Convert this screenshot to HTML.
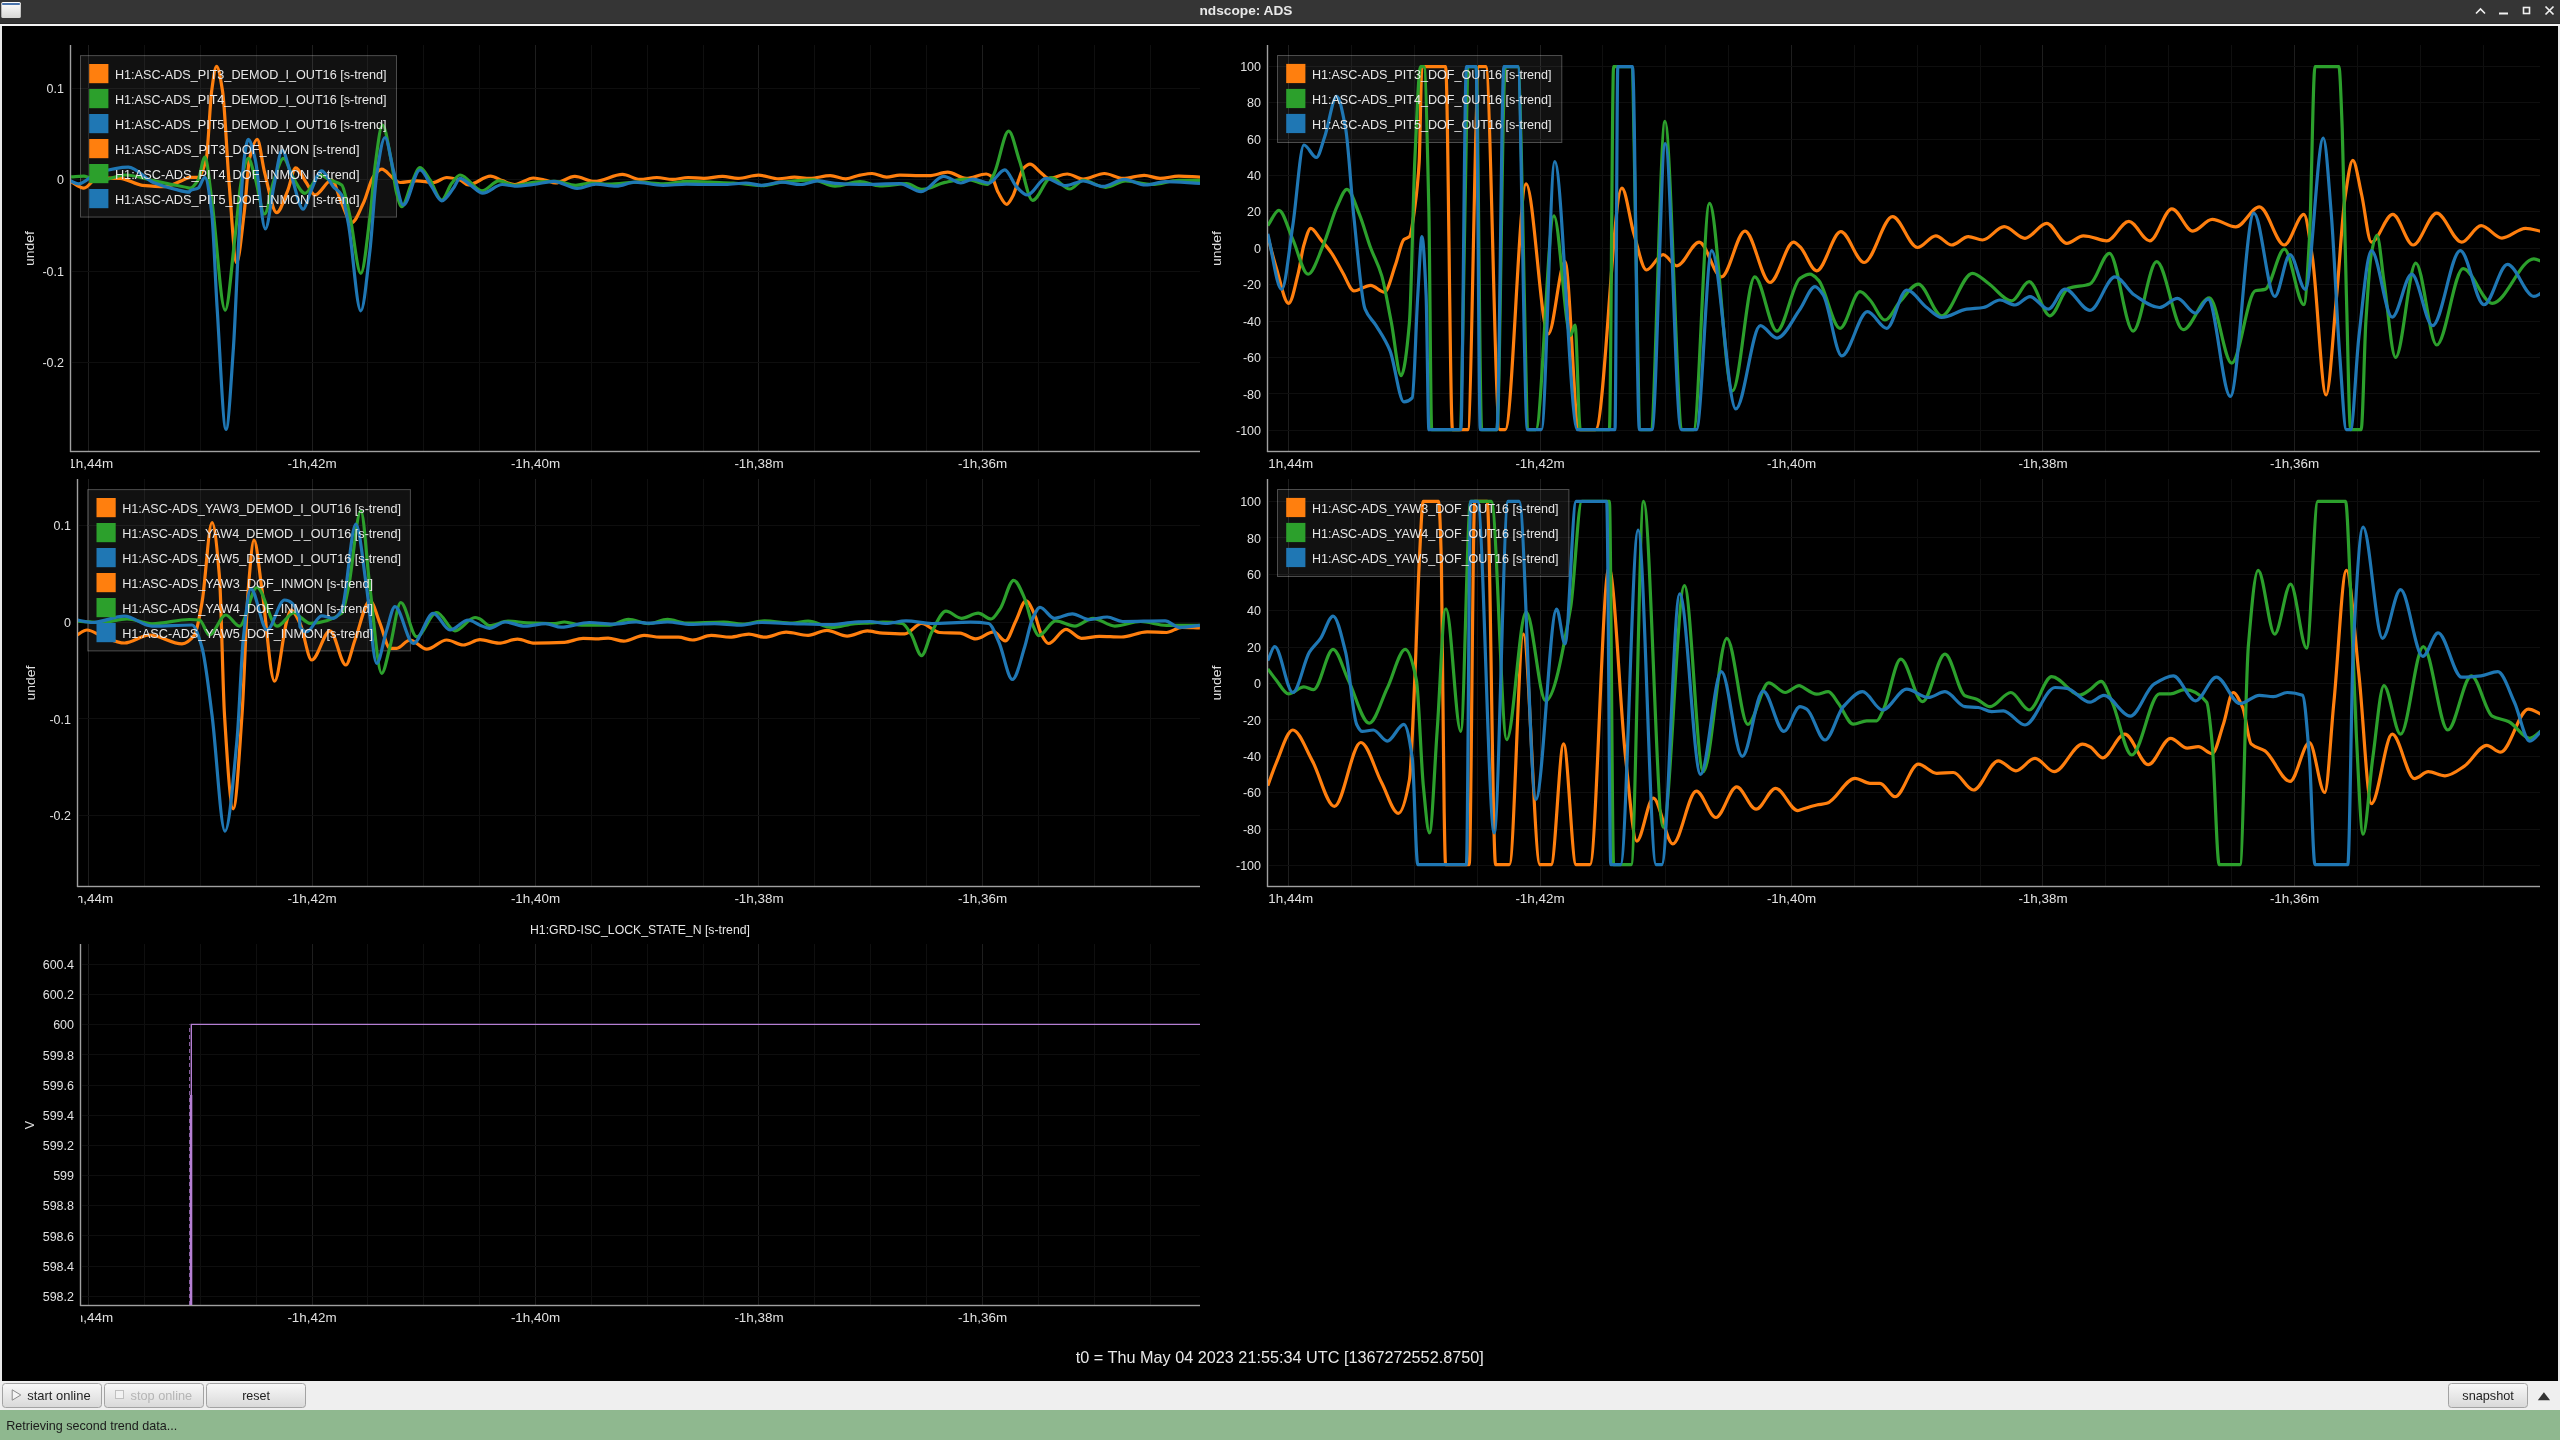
<!DOCTYPE html>
<html><head><meta charset="utf-8"><title>ndscope: ADS</title>
<style>html,body{margin:0;padding:0;width:2560px;height:1440px;overflow:hidden;background:#000;font-family:"Liberation Sans",sans-serif;}</style>
</head><body><svg width="2560" height="1440" viewBox="0 0 2560 1440" style="display:block;will-change:transform;font-family:'Liberation Sans', sans-serif"><rect x="0" y="0" width="2560" height="24" fill="#353535"/><rect x="0" y="23" width="2560" height="1" fill="#2b2b2b"/><rect x="0" y="24" width="2560" height="2" fill="#f4f4f4"/><defs><linearGradient id="wig" x1="0" y1="0" x2="0" y2="1"><stop offset="0" stop-color="#ffffff"/><stop offset="1" stop-color="#d8d8d6"/></linearGradient><linearGradient id="btng" x1="0" y1="0" x2="0" y2="1"><stop offset="0" stop-color="#f8f8f8"/><stop offset="1" stop-color="#d9d9d9"/></linearGradient></defs><rect x="1.3" y="2" width="19.5" height="16" rx="1.5" fill="url(#wig)"/><rect x="2.2" y="3" width="17.6" height="2" fill="#4a74ac"/><text x="1246.0" y="15.3" font-size="13" fill="#e8e8e8" text-anchor="middle" font-weight="bold" textLength="93.0" lengthAdjust="spacingAndGlyphs">ndscope: ADS</text><path d="M2476,13.5 L2480.5,9 L2485,13.5" stroke="#f0f0f0" stroke-width="1.6" fill="none"/><rect x="2499" y="12.5" width="9" height="2" fill="#f0f0f0"/><rect x="2523.5" y="7.5" width="6" height="6" stroke="#f0f0f0" stroke-width="1.6" fill="none"/><path d="M2545.5,6.5 L2553.5,14.5 M2553.5,6.5 L2545.5,14.5" stroke="#f0f0f0" stroke-width="1.7" fill="none"/><rect x="0" y="26" width="2560" height="1355" fill="#e8e8e8"/><rect x="2" y="26" width="2556" height="1355" fill="#000"/><rect x="88" y="45" width="1" height="406" fill="#1e1e1e"/><rect x="144" y="45" width="1" height="406" fill="#0f0f0f"/><rect x="200" y="45" width="1" height="406" fill="#0f0f0f"/><rect x="256" y="45" width="1" height="406" fill="#0f0f0f"/><rect x="312" y="45" width="1" height="406" fill="#1e1e1e"/><rect x="367" y="45" width="1" height="406" fill="#0f0f0f"/><rect x="423" y="45" width="1" height="406" fill="#0f0f0f"/><rect x="479" y="45" width="1" height="406" fill="#0f0f0f"/><rect x="535" y="45" width="1" height="406" fill="#1e1e1e"/><rect x="591" y="45" width="1" height="406" fill="#0f0f0f"/><rect x="647" y="45" width="1" height="406" fill="#0f0f0f"/><rect x="703" y="45" width="1" height="406" fill="#0f0f0f"/><rect x="758" y="45" width="1" height="406" fill="#1e1e1e"/><rect x="814" y="45" width="1" height="406" fill="#0f0f0f"/><rect x="870" y="45" width="1" height="406" fill="#0f0f0f"/><rect x="926" y="45" width="1" height="406" fill="#0f0f0f"/><rect x="982" y="45" width="1" height="406" fill="#1e1e1e"/><rect x="1038" y="45" width="1" height="406" fill="#0f0f0f"/><rect x="1094" y="45" width="1" height="406" fill="#0f0f0f"/><rect x="1150" y="45" width="1" height="406" fill="#0f0f0f"/><rect x="72" y="88" width="1128" height="1" fill="#0e0e0e"/><rect x="72" y="179" width="1128" height="1" fill="#0e0e0e"/><rect x="72" y="271" width="1128" height="1" fill="#0e0e0e"/><rect x="72" y="362" width="1128" height="1" fill="#0e0e0e"/><rect x="69.8" y="45" width="1.4" height="407" fill="#a0a0a0"/><rect x="70" y="450.8" width="1130" height="1.4" fill="#a0a0a0"/><text x="64.0" y="92.8" font-size="12.5" fill="#e0e0e0" text-anchor="end" font-weight="normal">0.1</text><text x="64.0" y="184.2" font-size="12.5" fill="#e0e0e0" text-anchor="end" font-weight="normal">0</text><text x="64.0" y="275.7" font-size="12.5" fill="#e0e0e0" text-anchor="end" font-weight="normal">-0.1</text><text x="64.0" y="367.1" font-size="12.5" fill="#e0e0e0" text-anchor="end" font-weight="normal">-0.2</text><clipPath id="ctlx"><rect x="71" y="451" width="1170" height="30"/></clipPath><g clip-path="url(#ctlx)"><text x="88.5" y="468.0" font-size="12.5" fill="#e0e0e0" text-anchor="middle" font-weight="normal" textLength="49.2" lengthAdjust="spacingAndGlyphs">-1h,44m</text><text x="312.0" y="468.0" font-size="12.5" fill="#e0e0e0" text-anchor="middle" font-weight="normal" textLength="49.2" lengthAdjust="spacingAndGlyphs">-1h,42m</text><text x="535.5" y="468.0" font-size="12.5" fill="#e0e0e0" text-anchor="middle" font-weight="normal" textLength="49.2" lengthAdjust="spacingAndGlyphs">-1h,40m</text><text x="759.0" y="468.0" font-size="12.5" fill="#e0e0e0" text-anchor="middle" font-weight="normal" textLength="49.2" lengthAdjust="spacingAndGlyphs">-1h,38m</text><text x="982.5" y="468.0" font-size="12.5" fill="#e0e0e0" text-anchor="middle" font-weight="normal" textLength="49.2" lengthAdjust="spacingAndGlyphs">-1h,36m</text></g><text x="0" y="0" font-size="12.5" fill="#e0e0e0" text-anchor="middle" textLength="35" lengthAdjust="spacingAndGlyphs" transform="translate(34.0,248.5) rotate(-90)">undef</text><rect x="80.5" y="55.6" width="316.0" height="161.5" fill="rgba(255,255,255,0.065)" stroke="rgba(255,255,255,0.28)" stroke-width="1"/><clipPath id="ctl"><rect x="71" y="45" width="1129" height="406"/></clipPath><g clip-path="url(#ctl)"><path d="M70.0,181.1C74.6,183.4 79.3,188.1 83.9,188.1C88.5,188.1 93.1,177.8 97.8,177.8C105.2,177.8 112.6,178.0 120.0,178.3C127.4,178.7 134.8,184.5 142.2,185.3C149.6,186.0 157.0,186.7 164.4,186.7C170.0,186.7 175.6,183.2 181.1,181.1C184.1,180.0 187.0,177.4 190.0,177.4C192.7,177.4 195.4,177.4 198.1,177.4C200.8,177.4 203.6,169.6 206.3,158.4C208.1,151.0 209.9,103.5 211.7,90.7C213.3,79.1 214.9,66.3 216.6,66.3C218.5,66.3 220.5,78.2 222.5,90.7C224.8,104.8 227.0,158.3 229.3,185.5C231.7,214.9 234.2,262.7 236.6,262.7C239.1,262.7 241.7,233.0 244.2,212.6C246.0,198.1 247.8,165.9 249.6,158.4C252.1,147.9 254.7,139.4 257.2,139.4C259.6,139.4 262.1,162.5 264.5,172.0C268.6,187.6 272.7,212.6 276.7,212.6C280.3,212.6 283.9,199.5 287.6,190.9C290.3,184.5 293.0,167.9 295.7,167.9C299.3,167.9 303.0,178.2 306.7,183.3C309.4,187.2 312.2,195.0 315.0,195.0C320.6,195.0 326.1,180.0 331.7,180.0C335.0,180.0 338.3,196.3 341.7,203.3C345.0,210.3 348.3,222.5 351.7,222.5C355.6,222.5 359.4,211.3 363.3,203.3C366.7,196.5 370.0,181.1 373.3,176.7C376.1,173.0 378.9,169.2 381.7,169.2C385.6,169.2 389.4,175.7 393.3,178.3C395.6,179.9 397.8,182.5 400.0,182.5C405.6,182.5 411.1,180.8 416.7,180.8C422.2,180.8 427.8,182.5 433.3,182.5C437.8,182.5 442.2,177.5 446.7,177.5C451.1,177.5 455.6,178.7 460.0,180.0C462.8,180.8 465.6,185.0 468.3,185.0C469.2,185.0 470.1,184.7 470.9,184.5C477.4,183.0 484.0,176.2 490.5,176.2C494.4,176.2 498.3,179.3 502.2,180.6C506.4,182.0 510.5,184.5 514.7,184.5C520.9,184.5 527.2,178.0 533.4,178.0C537.6,178.0 541.8,179.4 545.9,180.3C549.1,181.0 552.2,183.0 555.3,183.0C561.8,183.0 568.3,176.4 574.8,176.4C581.4,176.4 587.9,181.4 594.4,181.4C603.8,181.4 613.1,174.4 622.5,174.4C628.2,174.4 634.0,179.4 639.7,179.4C645.4,179.4 651.1,177.5 656.9,177.5C662.1,177.5 667.3,179.4 672.5,179.4C677.7,179.4 682.9,177.5 688.1,177.5C693.3,177.5 698.5,178.3 703.8,178.3C710.0,178.3 716.2,176.4 722.5,176.4C727.7,176.4 732.9,178.3 738.1,178.3C744.9,178.3 751.7,175.2 758.4,175.2C765.2,175.2 772.0,178.8 778.8,178.8C784.0,178.8 789.2,177.2 794.4,177.2C799.6,177.2 804.8,178.3 810.0,178.3C816.8,178.3 823.5,175.6 830.3,175.6C835.5,175.6 840.7,178.8 845.9,178.8C850.6,178.8 855.3,175.9 860.0,175.1C864.0,174.4 868.0,173.5 872.0,173.5C876.8,173.5 881.7,177.1 886.6,177.1C891.0,177.1 895.4,175.1 899.8,175.1C906.5,175.1 913.1,175.7 919.8,175.7C922.9,175.7 926.0,175.7 929.1,175.7C935.3,175.7 941.5,172.2 947.6,172.2C953.8,172.2 960.0,178.4 966.2,178.4C972.9,178.4 979.5,174.0 986.2,174.0C987.9,174.0 989.7,175.1 991.5,176.4C993.7,178.0 995.9,188.4 998.1,192.3C1001.0,197.4 1003.9,204.3 1006.7,204.3C1008.7,204.3 1010.7,199.9 1012.7,196.3C1014.5,193.1 1016.3,186.4 1018.0,181.7C1019.8,177.1 1021.6,170.3 1023.3,168.4C1025.6,166.1 1027.8,164.2 1030.0,164.2C1033.5,164.2 1037.1,169.7 1040.6,172.4C1043.3,174.4 1045.9,178.4 1048.6,178.4C1054.8,178.4 1061.0,174.0 1067.2,174.0C1072.5,174.0 1077.8,179.1 1083.1,179.1C1090.2,179.1 1097.3,173.5 1104.4,173.5C1110.6,173.5 1116.8,178.4 1122.9,178.4C1130.0,178.4 1137.1,175.3 1144.2,175.3C1149.5,175.3 1154.8,178.4 1160.1,178.4C1166.3,178.4 1172.5,176.1 1178.7,176.1C1185.8,176.1 1192.9,176.8 1200.0,177.1" stroke="#ff7f0e" stroke-width="3.2" fill="none" stroke-linejoin="round"/><path d="M70.0,176.9C74.6,176.7 79.3,176.1 83.9,176.1C88.5,176.1 93.1,181.1 97.8,181.1C107.0,181.1 116.3,175.0 125.6,175.0C134.8,175.0 144.1,178.6 153.3,180.6C160.7,182.1 168.1,183.8 175.6,185.3C180.2,186.2 184.8,186.9 189.4,188.1C189.6,188.1 189.8,188.2 190.0,188.2C192.7,188.2 195.4,184.3 198.1,180.1C200.4,176.5 202.6,157.0 204.9,157.0C207.2,157.0 209.4,183.3 211.7,199.1C216.2,230.5 220.7,310.2 225.2,310.2C228.4,310.2 231.6,265.3 234.7,239.7C237.0,221.4 239.2,190.7 241.5,180.1C243.7,169.5 246.0,158.4 248.3,158.4C250.5,158.4 252.8,170.1 255.0,177.4C258.2,187.5 261.4,214.0 264.5,214.0C267.7,214.0 270.8,188.9 274.0,180.1C277.2,171.3 280.3,158.4 283.5,158.4C286.7,158.4 289.8,172.3 293.0,177.4C297.0,183.8 301.0,193.3 305.0,193.3C310.0,193.3 315.0,175.0 320.0,175.0C323.3,175.0 326.7,178.5 330.0,180.0C333.9,181.8 337.8,181.9 341.7,185.0C344.4,187.2 347.2,204.5 350.0,216.7C353.6,232.5 357.2,273.3 360.8,273.3C363.9,273.3 366.9,240.6 370.0,216.7C371.7,203.6 373.3,178.8 375.0,166.7C377.5,148.5 380.0,125.0 382.5,125.0C385.3,125.0 388.1,144.8 390.8,158.3C392.8,167.8 394.7,186.2 396.7,193.3C398.3,199.4 400.0,206.7 401.7,206.7C405.0,206.7 408.3,190.3 411.7,183.3C414.4,177.5 417.2,167.5 420.0,167.5C423.3,167.5 426.7,175.2 430.0,180.0C433.9,185.6 437.8,200.0 441.7,200.0C445.0,200.0 448.3,187.5 451.7,183.3C454.4,179.9 457.2,175.0 460.0,175.0C467.3,175.0 474.6,190.8 481.9,190.8C487.6,190.8 493.3,180.9 499.1,180.9C504.3,180.9 509.5,185.3 514.7,185.3C522.5,185.3 530.3,182.2 538.1,181.9C543.9,181.6 549.6,181.4 555.3,181.4C562.1,181.4 568.9,185.3 575.6,185.3C580.8,185.3 586.0,183.0 591.2,183.0C597.0,183.0 602.7,184.1 608.4,184.1C618.9,184.1 629.3,182.2 639.7,182.2C647.5,182.2 655.3,183.8 663.1,183.8C671.5,183.8 679.8,181.4 688.1,181.4C695.4,181.4 702.7,181.9 710.0,182.2C717.8,182.5 725.6,182.6 733.4,183.0C742.8,183.4 752.2,185.6 761.6,185.6C768.3,185.6 775.1,182.9 781.9,182.2C792.3,181.1 802.7,179.8 813.1,179.8C820.4,179.8 827.7,186.1 835.0,186.1C843.3,186.1 851.7,181.7 860.0,181.7C866.6,181.7 873.3,186.0 879.9,186.0C888.8,186.0 897.6,183.7 906.5,183.7C911.8,183.7 917.1,189.4 922.4,189.4C929.9,189.4 937.5,183.9 945.0,182.4C952.1,180.9 959.2,179.1 966.2,179.1C973.3,179.1 980.4,184.4 987.5,184.4C989.7,184.4 991.9,178.2 994.1,173.7C999.0,164.0 1003.9,131.2 1008.7,131.2C1012.3,131.2 1015.8,150.3 1019.4,160.5C1023.8,173.1 1028.2,200.3 1032.6,200.3C1038.8,200.3 1045.0,177.7 1051.2,177.7C1057.4,177.7 1063.6,189.0 1069.8,189.0C1074.3,189.0 1078.7,180.4 1083.1,180.4C1090.6,180.4 1098.2,187.3 1105.7,187.3C1112.3,187.3 1119.0,181.0 1125.6,181.0C1134.5,181.0 1143.3,184.4 1152.2,184.4C1161.0,184.4 1169.9,180.4 1178.7,180.4C1185.8,180.4 1192.9,180.4 1200.0,180.4" stroke="#2ca02c" stroke-width="3.2" fill="none" stroke-linejoin="round"/><path d="M70.0,180.6C72.8,181.7 75.6,183.9 78.3,183.9C84.8,183.9 91.3,174.6 97.8,172.8C108.0,169.9 118.1,167.2 128.3,167.2C136.7,167.2 145.0,179.1 153.3,182.5C160.7,185.5 168.1,187.7 175.6,189.4C180.2,190.6 184.8,192.2 189.4,192.2C189.6,192.2 189.8,191.1 190.0,190.9C192.7,188.9 195.4,189.7 198.1,188.2C200.4,186.9 202.6,177.4 204.9,177.4C207.2,177.4 209.4,194.1 211.7,212.6C213.5,227.4 215.3,279.5 217.1,307.5C220.1,353.6 223.1,429.4 226.0,429.4C228.5,429.4 230.9,383.4 233.4,348.1C235.2,321.9 237.0,270.7 238.8,239.7C240.6,208.7 242.4,170.9 244.2,158.4C245.6,149.0 246.9,139.4 248.3,139.4C250.5,139.4 252.8,149.7 255.0,158.4C258.5,171.7 261.9,228.9 265.3,228.9C268.2,228.9 271.1,198.9 274.0,185.5C276.7,172.9 279.4,150.3 282.1,150.3C284.9,150.3 287.6,164.5 290.3,172.0C294.6,183.9 299.0,209.2 303.3,209.2C305.6,209.2 307.8,198.1 310.0,193.3C313.9,185.0 317.8,170.8 321.7,170.8C325.6,170.8 329.4,182.2 333.3,186.7C336.1,189.8 338.9,190.4 341.7,195.0C343.9,198.7 346.1,211.9 348.3,223.3C352.5,244.8 356.7,310.8 360.8,310.8C363.9,310.8 366.9,275.9 370.0,250.0C372.2,231.2 374.4,189.5 376.7,175.0C379.4,156.9 382.2,137.5 385.0,137.5C387.8,137.5 390.6,159.7 393.3,170.0C396.7,182.3 400.0,205.0 403.3,205.0C408.9,205.0 414.4,170.0 420.0,170.0C423.9,170.0 427.8,181.1 431.7,186.7C435.0,191.4 438.3,200.8 441.7,200.8C445.6,200.8 449.4,193.3 453.3,188.3C455.6,185.5 457.8,178.3 460.0,178.3C463.6,178.3 467.3,182.9 470.9,185.3C474.8,187.9 478.8,193.1 482.7,193.1C489.2,193.1 495.7,184.5 502.2,184.5C506.4,184.5 510.5,186.1 514.7,186.1C520.9,186.1 527.2,185.2 533.4,184.5C540.2,183.8 547.0,181.4 553.8,181.4C561.6,181.4 569.4,188.4 577.2,188.4C583.4,188.4 589.7,184.1 595.9,184.1C602.7,184.1 609.5,186.1 616.2,186.1C622.5,186.1 628.8,182.2 635.0,182.2C644.4,182.2 653.8,185.3 663.1,185.3C670.9,185.3 678.8,184.2 686.6,184.2C694.4,184.2 702.2,184.5 710.0,184.5C715.2,184.5 720.4,184.5 725.6,184.5C732.4,184.5 739.2,183.0 745.9,183.0C751.1,183.0 756.4,185.3 761.6,185.3C768.3,185.3 775.1,182.2 781.9,182.2C788.1,182.2 794.4,184.5 800.6,184.5C806.4,184.5 812.1,180.9 817.8,180.9C823.5,180.9 829.3,183.1 835.0,183.4C843.3,184.0 851.7,184.4 860.0,184.4C873.3,184.4 886.6,183.7 899.8,183.7C906.9,183.7 914.0,191.7 921.1,191.7C928.6,191.7 936.1,176.4 943.7,176.4C949.4,176.4 955.2,183.0 960.9,183.0C964.9,183.0 968.9,179.1 972.9,179.1C978.2,179.1 983.5,183.0 988.8,183.0C994.1,183.0 999.4,169.8 1004.8,169.8C1008.7,169.8 1012.7,183.1 1016.7,187.0C1020.2,190.5 1023.8,195.0 1027.3,195.0C1033.5,195.0 1039.7,178.4 1045.9,178.4C1052.6,178.4 1059.2,185.7 1065.8,185.7C1071.6,185.7 1077.4,181.0 1083.1,181.0C1089.7,181.0 1096.4,186.4 1103.0,186.4C1110.1,186.4 1117.2,179.3 1124.3,179.3C1131.4,179.3 1138.4,185.0 1145.5,185.0C1152.2,185.0 1158.8,181.7 1165.4,181.7C1177.0,181.7 1188.5,182.8 1200.0,183.3" stroke="#1f77b4" stroke-width="3.2" fill="none" stroke-linejoin="round"/></g><rect x="89.2" y="64.0" width="19.2" height="19.2" fill="#ff7f0e"/><text x="114.9" y="79.2" font-size="13" fill="#e6e6e6" text-anchor="start" font-weight="normal" textLength="271.6" lengthAdjust="spacingAndGlyphs">H1:ASC-ADS_PIT3_DEMOD_I_OUT16 [s-trend]</text><rect x="89.2" y="89.0" width="19.2" height="19.2" fill="#2ca02c"/><text x="114.9" y="104.2" font-size="13" fill="#e6e6e6" text-anchor="start" font-weight="normal" textLength="271.6" lengthAdjust="spacingAndGlyphs">H1:ASC-ADS_PIT4_DEMOD_I_OUT16 [s-trend]</text><rect x="89.2" y="114.0" width="19.2" height="19.2" fill="#1f77b4"/><text x="114.9" y="129.2" font-size="13" fill="#e6e6e6" text-anchor="start" font-weight="normal" textLength="271.6" lengthAdjust="spacingAndGlyphs">H1:ASC-ADS_PIT5_DEMOD_I_OUT16 [s-trend]</text><rect x="89.2" y="139.0" width="19.2" height="19.2" fill="#ff7f0e"/><text x="114.9" y="154.2" font-size="13" fill="#e6e6e6" text-anchor="start" font-weight="normal" textLength="244.6" lengthAdjust="spacingAndGlyphs">H1:ASC-ADS_PIT3_DOF_INMON [s-trend]</text><rect x="89.2" y="164.0" width="19.2" height="19.2" fill="#2ca02c"/><text x="114.9" y="179.2" font-size="13" fill="#e6e6e6" text-anchor="start" font-weight="normal" textLength="244.6" lengthAdjust="spacingAndGlyphs">H1:ASC-ADS_PIT4_DOF_INMON [s-trend]</text><rect x="89.2" y="189.0" width="19.2" height="19.2" fill="#1f77b4"/><text x="114.9" y="204.2" font-size="13" fill="#e6e6e6" text-anchor="start" font-weight="normal" textLength="244.6" lengthAdjust="spacingAndGlyphs">H1:ASC-ADS_PIT5_DOF_INMON [s-trend]</text><rect x="1288" y="45" width="1" height="406" fill="#1e1e1e"/><rect x="1351" y="45" width="1" height="406" fill="#0f0f0f"/><rect x="1414" y="45" width="1" height="406" fill="#0f0f0f"/><rect x="1477" y="45" width="1" height="406" fill="#0f0f0f"/><rect x="1540" y="45" width="1" height="406" fill="#1e1e1e"/><rect x="1602" y="45" width="1" height="406" fill="#0f0f0f"/><rect x="1665" y="45" width="1" height="406" fill="#0f0f0f"/><rect x="1728" y="45" width="1" height="406" fill="#0f0f0f"/><rect x="1791" y="45" width="1" height="406" fill="#1e1e1e"/><rect x="1854" y="45" width="1" height="406" fill="#0f0f0f"/><rect x="1917" y="45" width="1" height="406" fill="#0f0f0f"/><rect x="1980" y="45" width="1" height="406" fill="#0f0f0f"/><rect x="2042" y="45" width="1" height="406" fill="#1e1e1e"/><rect x="2105" y="45" width="1" height="406" fill="#0f0f0f"/><rect x="2168" y="45" width="1" height="406" fill="#0f0f0f"/><rect x="2231" y="45" width="1" height="406" fill="#0f0f0f"/><rect x="2294" y="45" width="1" height="406" fill="#1e1e1e"/><rect x="2357" y="45" width="1" height="406" fill="#0f0f0f"/><rect x="2420" y="45" width="1" height="406" fill="#0f0f0f"/><rect x="2483" y="45" width="1" height="406" fill="#0f0f0f"/><rect x="1269" y="66" width="1271" height="1" fill="#0e0e0e"/><rect x="1269" y="102" width="1271" height="1" fill="#0e0e0e"/><rect x="1269" y="139" width="1271" height="1" fill="#0e0e0e"/><rect x="1269" y="175" width="1271" height="1" fill="#0e0e0e"/><rect x="1269" y="211" width="1271" height="1" fill="#0e0e0e"/><rect x="1269" y="248" width="1271" height="1" fill="#0e0e0e"/><rect x="1269" y="284" width="1271" height="1" fill="#0e0e0e"/><rect x="1269" y="321" width="1271" height="1" fill="#0e0e0e"/><rect x="1269" y="357" width="1271" height="1" fill="#0e0e0e"/><rect x="1269" y="393" width="1271" height="1" fill="#0e0e0e"/><rect x="1269" y="430" width="1271" height="1" fill="#0e0e0e"/><rect x="1266.8" y="45" width="1.4" height="407" fill="#a0a0a0"/><rect x="1267" y="450.8" width="1273" height="1.4" fill="#a0a0a0"/><text x="1261.0" y="70.8" font-size="12.5" fill="#e0e0e0" text-anchor="end" font-weight="normal">100</text><text x="1261.0" y="107.2" font-size="12.5" fill="#e0e0e0" text-anchor="end" font-weight="normal">80</text><text x="1261.0" y="143.7" font-size="12.5" fill="#e0e0e0" text-anchor="end" font-weight="normal">60</text><text x="1261.0" y="180.0" font-size="12.5" fill="#e0e0e0" text-anchor="end" font-weight="normal">40</text><text x="1261.0" y="216.4" font-size="12.5" fill="#e0e0e0" text-anchor="end" font-weight="normal">20</text><text x="1261.0" y="252.8" font-size="12.5" fill="#e0e0e0" text-anchor="end" font-weight="normal">0</text><text x="1261.0" y="289.2" font-size="12.5" fill="#e0e0e0" text-anchor="end" font-weight="normal">-20</text><text x="1261.0" y="325.7" font-size="12.5" fill="#e0e0e0" text-anchor="end" font-weight="normal">-40</text><text x="1261.0" y="362.1" font-size="12.5" fill="#e0e0e0" text-anchor="end" font-weight="normal">-60</text><text x="1261.0" y="398.5" font-size="12.5" fill="#e0e0e0" text-anchor="end" font-weight="normal">-80</text><text x="1261.0" y="434.9" font-size="12.5" fill="#e0e0e0" text-anchor="end" font-weight="normal">-100</text><clipPath id="ctrx"><rect x="1268" y="451" width="1313" height="30"/></clipPath><g clip-path="url(#ctrx)"><text x="1288.5" y="468.0" font-size="12.5" fill="#e0e0e0" text-anchor="middle" font-weight="normal" textLength="49.2" lengthAdjust="spacingAndGlyphs">-1h,44m</text><text x="1540.0" y="468.0" font-size="12.5" fill="#e0e0e0" text-anchor="middle" font-weight="normal" textLength="49.2" lengthAdjust="spacingAndGlyphs">-1h,42m</text><text x="1791.5" y="468.0" font-size="12.5" fill="#e0e0e0" text-anchor="middle" font-weight="normal" textLength="49.2" lengthAdjust="spacingAndGlyphs">-1h,40m</text><text x="2043.0" y="468.0" font-size="12.5" fill="#e0e0e0" text-anchor="middle" font-weight="normal" textLength="49.2" lengthAdjust="spacingAndGlyphs">-1h,38m</text><text x="2294.5" y="468.0" font-size="12.5" fill="#e0e0e0" text-anchor="middle" font-weight="normal" textLength="49.2" lengthAdjust="spacingAndGlyphs">-1h,36m</text></g><text x="0" y="0" font-size="12.5" fill="#e0e0e0" text-anchor="middle" textLength="35" lengthAdjust="spacingAndGlyphs" transform="translate(1221.0,248.5) rotate(-90)">undef</text><rect x="1277.5" y="55.5" width="284.3" height="87.0" fill="rgba(255,255,255,0.065)" stroke="rgba(255,255,255,0.28)" stroke-width="1"/><clipPath id="ctr"><rect x="1268" y="45" width="1272" height="406"/></clipPath><g clip-path="url(#ctr)"><path d="M1267.8,236.7C1270.6,246.9 1273.3,258.2 1276.1,267.2C1280.3,280.8 1284.4,303.3 1288.6,303.3C1291.9,303.3 1295.1,285.6 1298.3,272.8C1300.2,265.5 1302.0,251.1 1303.9,245.0C1306.2,237.4 1308.5,228.3 1310.8,228.3C1314.1,228.3 1317.3,235.6 1320.6,239.4C1324.3,243.9 1328.0,247.9 1331.7,253.3C1335.4,258.7 1339.1,266.5 1342.8,272.8C1346.5,279.0 1350.2,290.8 1353.9,290.8C1359.4,290.8 1365.0,285.3 1370.6,285.3C1375.2,285.3 1379.8,292.2 1384.4,292.2C1388.1,292.2 1391.9,274.6 1395.6,264.4C1398.3,256.8 1401.1,241.7 1403.9,239.4C1405.7,237.9 1407.6,238.4 1409.4,236.7C1411.3,235.0 1413.1,219.8 1415.0,206.1C1416.4,195.9 1417.8,185.1 1419.2,161.7C1420.1,146.1 1421.0,66.7 1421.9,66.7C1429.8,66.7 1437.7,66.7 1445.6,66.7C1447.9,66.7 1450.2,429.7 1452.5,429.7C1457.6,429.7 1462.7,429.7 1467.8,429.7C1471.5,429.7 1475.2,66.7 1478.9,66.7C1481.2,66.7 1483.5,66.7 1485.8,66.7C1490.5,66.7 1495.1,429.7 1499.7,429.7C1501.6,429.7 1503.4,429.7 1505.3,429.7C1512.2,429.7 1519.2,183.9 1526.1,183.9C1533.5,183.9 1540.9,333.9 1548.3,333.9C1553.9,333.9 1559.4,261.7 1565.0,261.7C1569.6,261.7 1574.3,429.7 1578.9,429.7C1584.4,429.7 1590.0,429.7 1595.6,429.7C1604.4,429.7 1613.1,188.1 1621.9,188.1C1625.9,188.1 1629.9,220.8 1633.9,233.9C1638.1,247.6 1642.2,270.0 1646.4,270.0C1651.9,270.0 1657.5,254.7 1663.1,254.7C1667.7,254.7 1672.3,265.8 1676.9,265.8C1684.4,265.8 1691.8,242.2 1699.2,242.2C1706.6,242.2 1714.0,276.9 1721.4,276.9C1729.3,276.9 1737.1,231.1 1745.0,231.1C1753.3,231.1 1761.7,282.5 1770.0,282.5C1777.9,282.5 1785.7,242.2 1793.6,242.2C1795.7,242.2 1797.9,244.8 1800.0,246.7C1805.6,251.6 1811.1,270.8 1816.7,270.8C1824.7,270.8 1832.8,231.7 1840.8,231.7C1848.6,231.7 1856.4,262.5 1864.2,262.5C1873.6,262.5 1883.1,216.7 1892.5,216.7C1900.8,216.7 1909.2,247.5 1917.5,247.5C1923.6,247.5 1929.7,235.8 1935.8,235.8C1941.1,235.8 1946.4,245.0 1951.7,245.0C1957.2,245.0 1962.8,236.7 1968.3,236.7C1973.1,236.7 1977.8,240.0 1982.5,240.0C1989.7,240.0 1996.9,226.7 2004.2,226.7C2011.1,226.7 2018.1,238.3 2025.0,238.3C2032.2,238.3 2039.4,223.3 2046.7,223.3C2053.3,223.3 2060.0,243.3 2066.7,243.3C2072.2,243.3 2077.8,235.8 2083.3,235.8C2085.6,235.8 2087.8,236.3 2090.0,236.7C2095.6,237.6 2101.1,240.8 2106.7,240.8C2114.1,240.8 2121.5,221.4 2128.9,221.4C2135.8,221.4 2142.8,240.8 2149.7,240.8C2157.1,240.8 2164.5,208.9 2171.9,208.9C2178.9,208.9 2185.8,231.1 2192.8,231.1C2199.3,231.1 2205.7,219.4 2212.2,219.4C2220.1,219.4 2228.0,226.9 2235.8,226.9C2243.7,226.9 2251.6,206.9 2259.4,206.9C2267.8,206.9 2276.1,245.0 2284.4,245.0C2290.9,245.0 2297.4,214.4 2303.9,214.4C2306.7,214.4 2309.4,238.1 2312.2,256.1C2316.9,286.1 2321.5,395.0 2326.1,395.0C2329.6,395.0 2333.1,331.9 2336.7,295.0C2339.4,265.8 2342.2,216.6 2345.0,197.8C2347.6,180.2 2350.2,160.3 2352.8,160.3C2355.7,160.3 2358.7,182.2 2361.7,195.0C2364.9,209.0 2368.1,242.2 2371.4,242.2C2378.5,242.2 2385.6,214.4 2392.8,214.4C2399.5,214.4 2406.3,245.0 2413.1,245.0C2420.9,245.0 2428.8,213.1 2436.7,213.1C2445.0,213.1 2453.3,242.2 2461.7,242.2C2468.1,242.2 2474.6,225.6 2481.1,225.6C2488.1,225.6 2495.0,238.1 2501.9,238.1C2509.8,238.1 2517.7,228.3 2525.6,228.3C2531.1,228.3 2536.7,230.6 2542.2,231.7" stroke="#ff7f0e" stroke-width="3.2" fill="none" stroke-linejoin="round"/><path d="M1267.8,225.6C1271.5,220.5 1275.2,210.3 1278.9,210.3C1283.5,210.3 1288.1,229.3 1292.8,239.4C1297.9,250.6 1303.0,274.2 1308.1,274.2C1313.1,274.2 1318.2,256.6 1323.3,245.0C1328.0,234.5 1332.6,215.8 1337.2,206.1C1340.5,199.3 1343.7,189.4 1346.9,189.4C1351.1,189.4 1355.3,204.4 1359.4,214.4C1363.1,223.4 1366.9,237.7 1370.6,247.8C1374.3,257.9 1378.0,263.2 1381.7,275.6C1384.9,286.3 1388.1,306.2 1391.4,322.8C1394.6,339.4 1397.9,375.6 1401.1,375.6C1403.9,375.6 1406.7,353.1 1409.4,322.8C1411.3,302.5 1413.1,194.9 1415.0,156.1C1416.9,117.3 1418.7,66.7 1420.6,66.7C1421.7,66.7 1422.8,66.7 1423.9,66.7C1425.6,66.7 1427.2,137.8 1428.9,211.7C1429.8,252.7 1430.7,429.7 1431.7,429.7C1440.9,429.7 1450.2,429.7 1459.4,429.7C1462.7,429.7 1465.9,66.7 1469.2,66.7C1471.5,66.7 1473.8,66.7 1476.1,66.7C1478.0,66.7 1479.8,429.7 1481.7,429.7C1486.8,429.7 1491.9,429.7 1496.9,429.7C1499.7,429.7 1502.5,66.7 1505.3,66.7C1509.4,66.7 1513.6,66.7 1517.8,66.7C1521.5,66.7 1525.2,429.7 1528.9,429.7C1531.2,429.7 1533.5,429.7 1535.8,429.7C1541.9,429.7 1547.9,215.8 1553.9,215.8C1559.4,215.8 1565.0,335.3 1570.6,335.3C1572.0,335.3 1573.5,325.0 1575.0,325.0C1576.8,325.0 1578.5,429.7 1580.3,429.7C1590.0,429.7 1599.7,429.7 1609.4,429.7C1610.8,429.7 1612.2,66.7 1613.6,66.7C1619.4,66.7 1625.3,66.7 1631.1,66.7C1634.4,66.7 1637.6,429.7 1640.8,429.7C1644.1,429.7 1647.3,429.7 1650.6,429.7C1655.4,429.7 1660.2,121.4 1665.0,121.4C1670.8,121.4 1676.7,429.7 1682.5,429.7C1686.2,429.7 1689.9,429.7 1693.6,429.7C1698.9,429.7 1704.2,203.3 1709.4,203.3C1717.1,203.3 1724.8,390.8 1732.5,390.8C1739.9,390.8 1747.3,276.9 1754.7,276.9C1762.1,276.9 1769.5,331.1 1776.9,331.1C1784.6,331.1 1792.3,283.3 1800.0,278.3C1803.3,276.2 1806.7,274.2 1810.0,274.2C1812.8,274.2 1815.6,277.3 1818.3,280.0C1825.6,287.1 1832.8,328.3 1840.0,328.3C1846.7,328.3 1853.3,291.7 1860.0,291.7C1863.3,291.7 1866.7,296.6 1870.0,300.0C1875.0,305.1 1880.0,320.0 1885.0,320.0C1890.0,320.0 1895.0,307.0 1900.0,301.7C1906.1,295.1 1912.2,284.2 1918.3,284.2C1926.1,284.2 1933.9,315.8 1941.7,315.8C1951.9,315.8 1962.2,273.3 1972.5,273.3C1977.8,273.3 1983.1,279.7 1988.3,283.3C1996.1,288.6 2003.9,300.8 2011.7,300.8C2017.5,300.8 2023.3,281.7 2029.2,281.7C2036.1,281.7 2043.1,315.8 2050.0,315.8C2056.1,315.8 2062.2,290.6 2068.3,288.3C2075.6,285.7 2082.8,286.5 2090.0,283.9C2096.5,281.5 2103.0,253.3 2109.4,253.3C2117.3,253.3 2125.2,331.1 2133.1,331.1C2140.9,331.1 2148.8,261.7 2156.7,261.7C2165.5,261.7 2174.3,329.7 2183.1,329.7C2191.9,329.7 2200.6,297.8 2209.4,297.8C2216.9,297.8 2224.3,363.1 2231.7,363.1C2239.5,363.1 2247.4,292.7 2255.3,290.8C2258.5,290.0 2261.8,290.2 2265.0,289.4C2271.5,287.9 2278.0,249.2 2284.4,249.2C2290.9,249.2 2297.4,304.7 2303.9,304.7C2305.7,304.7 2307.6,271.0 2309.4,239.4C2311.3,207.9 2313.1,66.7 2315.0,66.7C2323.0,66.7 2330.9,66.7 2338.9,66.7C2340.0,66.7 2341.1,100.6 2342.2,128.3C2343.6,163.0 2345.0,245.3 2346.4,295.0C2347.8,344.7 2349.2,429.7 2350.6,429.7C2354.1,429.7 2357.6,429.7 2361.1,429.7C2362.7,429.7 2364.3,348.3 2365.8,322.8C2367.7,292.7 2369.5,262.9 2371.4,253.3C2373.2,243.8 2375.1,235.3 2376.9,235.3C2379.3,235.3 2381.6,265.9 2383.9,281.1C2387.8,306.7 2391.7,357.5 2395.6,357.5C2402.3,357.5 2409.1,263.1 2415.8,263.1C2422.8,263.1 2429.7,345.0 2436.7,345.0C2445.5,345.0 2454.3,268.6 2463.1,268.6C2472.8,268.6 2482.5,303.3 2492.2,303.3C2506.1,303.3 2520.0,258.9 2533.9,258.9C2536.7,258.9 2539.4,260.7 2542.2,261.7" stroke="#2ca02c" stroke-width="3.2" fill="none" stroke-linejoin="round"/><path d="M1267.8,233.9C1272.4,252.4 1277.0,289.4 1281.7,289.4C1285.4,289.4 1289.1,249.3 1292.8,225.6C1296.5,201.8 1300.2,145.0 1303.9,145.0C1308.1,145.0 1312.2,157.5 1316.4,157.5C1319.2,157.5 1321.9,144.6 1324.7,136.7C1328.7,125.3 1332.7,96.4 1336.7,96.4C1339.6,96.4 1342.6,112.3 1345.6,128.3C1348.3,143.3 1351.1,191.2 1353.9,217.2C1357.6,251.9 1361.3,299.5 1365.0,308.9C1368.7,318.3 1372.4,319.5 1376.1,325.6C1380.7,333.1 1385.4,339.3 1390.0,350.6C1394.6,361.8 1399.3,401.9 1403.9,401.9C1406.7,401.9 1409.4,400.7 1412.2,397.8C1414.1,395.9 1415.9,324.3 1417.8,295.0C1419.2,273.0 1420.6,236.7 1421.9,236.7C1423.3,236.7 1424.7,263.7 1426.1,295.0C1427.0,315.9 1428.0,429.7 1428.9,429.7C1439.5,429.7 1450.2,429.7 1460.8,429.7C1462.7,429.7 1464.5,66.7 1466.4,66.7C1469.6,66.7 1472.9,66.7 1476.1,66.7C1477.5,66.7 1478.9,429.7 1480.3,429.7C1485.8,429.7 1491.4,429.7 1496.9,429.7C1499.3,429.7 1501.6,66.7 1503.9,66.7C1508.5,66.7 1513.1,66.7 1517.8,66.7C1521.0,66.7 1524.3,429.7 1527.5,429.7C1532.1,429.7 1536.8,429.7 1541.4,429.7C1545.8,429.7 1550.3,161.7 1554.7,161.7C1562.3,161.7 1569.9,429.7 1577.5,429.7C1590.0,429.7 1602.5,429.7 1615.0,429.7C1615.9,429.7 1616.9,66.7 1617.8,66.7C1622.7,66.7 1627.6,66.7 1632.5,66.7C1634.8,66.7 1637.1,429.7 1639.4,429.7C1643.6,429.7 1647.8,429.7 1651.9,429.7C1656.4,429.7 1660.8,143.6 1665.3,143.6C1670.6,143.6 1675.8,429.7 1681.1,429.7C1686.2,429.7 1691.3,429.7 1696.4,429.7C1701.5,429.7 1706.6,250.6 1711.7,250.6C1719.7,250.6 1727.8,408.9 1735.8,408.9C1744.0,408.9 1752.1,325.6 1760.3,325.6C1765.8,325.6 1771.4,338.1 1776.9,338.1C1784.6,338.1 1792.3,319.7 1800.0,309.2C1805.0,302.3 1810.0,286.7 1815.0,286.7C1817.8,286.7 1820.6,291.0 1823.3,295.0C1829.4,303.8 1835.6,355.8 1841.7,355.8C1850.3,355.8 1858.9,311.7 1867.5,311.7C1873.9,311.7 1880.3,328.3 1886.7,328.3C1893.3,328.3 1900.0,290.0 1906.7,290.0C1913.3,290.0 1920.0,302.5 1926.7,307.5C1931.7,311.3 1936.7,317.5 1941.7,317.5C1950.0,317.5 1958.3,310.4 1966.7,309.2C1972.2,308.3 1977.8,308.4 1983.3,307.5C1988.9,306.6 1994.4,300.0 2000.0,300.0C2005.0,300.0 2010.0,305.0 2015.0,305.0C2020.0,305.0 2025.0,296.7 2030.0,296.7C2036.1,296.7 2042.2,309.2 2048.3,309.2C2053.9,309.2 2059.4,289.2 2065.0,289.2C2073.3,289.2 2081.7,310.3 2090.0,310.3C2098.3,310.3 2106.7,276.9 2115.0,276.9C2121.5,276.9 2128.0,290.7 2134.4,295.0C2142.8,300.5 2151.1,307.5 2159.4,307.5C2165.5,307.5 2171.5,298.3 2177.5,298.3C2183.5,298.3 2189.5,313.1 2195.6,313.1C2199.7,313.1 2203.9,299.2 2208.1,299.2C2215.5,299.2 2222.9,396.4 2230.3,396.4C2238.1,396.4 2246.0,213.1 2253.9,213.1C2260.8,213.1 2267.8,296.4 2274.7,296.4C2279.8,296.4 2284.9,254.7 2290.0,254.7C2295.1,254.7 2300.2,289.4 2305.3,289.4C2311.3,289.4 2317.3,138.1 2323.3,138.1C2325.9,138.1 2328.5,180.5 2331.1,211.7C2333.9,245.1 2336.7,313.2 2339.4,350.6C2341.8,381.7 2344.1,429.7 2346.4,429.7C2347.8,429.7 2349.2,429.7 2350.6,429.7C2353.3,429.7 2356.1,360.7 2358.9,336.7C2363.1,300.6 2367.2,250.6 2371.4,250.6C2378.3,250.6 2385.3,317.2 2392.2,317.2C2398.7,317.2 2405.2,274.2 2411.7,274.2C2418.6,274.2 2425.6,325.6 2432.5,325.6C2441.8,325.6 2451.0,250.6 2460.3,250.6C2468.1,250.6 2476.0,304.7 2483.9,304.7C2491.8,304.7 2499.6,264.4 2507.5,264.4C2516.3,264.4 2525.1,296.4 2533.9,296.4C2536.7,296.4 2539.4,294.0 2542.2,292.8" stroke="#1f77b4" stroke-width="3.2" fill="none" stroke-linejoin="round"/></g><rect x="1286.2" y="63.9" width="19.2" height="19.2" fill="#ff7f0e"/><text x="1311.9" y="79.1" font-size="13" fill="#e6e6e6" text-anchor="start" font-weight="normal" textLength="239.7" lengthAdjust="spacingAndGlyphs">H1:ASC-ADS_PIT3_DOF_OUT16 [s-trend]</text><rect x="1286.2" y="88.9" width="19.2" height="19.2" fill="#2ca02c"/><text x="1311.9" y="104.1" font-size="13" fill="#e6e6e6" text-anchor="start" font-weight="normal" textLength="239.7" lengthAdjust="spacingAndGlyphs">H1:ASC-ADS_PIT4_DOF_OUT16 [s-trend]</text><rect x="1286.2" y="113.9" width="19.2" height="19.2" fill="#1f77b4"/><text x="1311.9" y="129.1" font-size="13" fill="#e6e6e6" text-anchor="start" font-weight="normal" textLength="239.7" lengthAdjust="spacingAndGlyphs">H1:ASC-ADS_PIT5_DOF_OUT16 [s-trend]</text><rect x="88" y="479" width="1" height="407" fill="#1e1e1e"/><rect x="144" y="479" width="1" height="407" fill="#0f0f0f"/><rect x="200" y="479" width="1" height="407" fill="#0f0f0f"/><rect x="256" y="479" width="1" height="407" fill="#0f0f0f"/><rect x="312" y="479" width="1" height="407" fill="#1e1e1e"/><rect x="367" y="479" width="1" height="407" fill="#0f0f0f"/><rect x="423" y="479" width="1" height="407" fill="#0f0f0f"/><rect x="479" y="479" width="1" height="407" fill="#0f0f0f"/><rect x="535" y="479" width="1" height="407" fill="#1e1e1e"/><rect x="591" y="479" width="1" height="407" fill="#0f0f0f"/><rect x="647" y="479" width="1" height="407" fill="#0f0f0f"/><rect x="703" y="479" width="1" height="407" fill="#0f0f0f"/><rect x="758" y="479" width="1" height="407" fill="#1e1e1e"/><rect x="814" y="479" width="1" height="407" fill="#0f0f0f"/><rect x="870" y="479" width="1" height="407" fill="#0f0f0f"/><rect x="926" y="479" width="1" height="407" fill="#0f0f0f"/><rect x="982" y="479" width="1" height="407" fill="#1e1e1e"/><rect x="1038" y="479" width="1" height="407" fill="#0f0f0f"/><rect x="1094" y="479" width="1" height="407" fill="#0f0f0f"/><rect x="1150" y="479" width="1" height="407" fill="#0f0f0f"/><rect x="79" y="525" width="1121" height="1" fill="#0e0e0e"/><rect x="79" y="622" width="1121" height="1" fill="#0e0e0e"/><rect x="79" y="718" width="1121" height="1" fill="#0e0e0e"/><rect x="79" y="815" width="1121" height="1" fill="#0e0e0e"/><rect x="76.8" y="479" width="1.4" height="408" fill="#a0a0a0"/><rect x="77" y="885.8" width="1123" height="1.4" fill="#a0a0a0"/><text x="71.0" y="530.1" font-size="12.5" fill="#e0e0e0" text-anchor="end" font-weight="normal">0.1</text><text x="71.0" y="626.8" font-size="12.5" fill="#e0e0e0" text-anchor="end" font-weight="normal">0</text><text x="71.0" y="723.5" font-size="12.5" fill="#e0e0e0" text-anchor="end" font-weight="normal">-0.1</text><text x="71.0" y="820.2" font-size="12.5" fill="#e0e0e0" text-anchor="end" font-weight="normal">-0.2</text><clipPath id="cmlx"><rect x="78" y="886" width="1163" height="30"/></clipPath><g clip-path="url(#cmlx)"><text x="88.5" y="903.0" font-size="12.5" fill="#e0e0e0" text-anchor="middle" font-weight="normal" textLength="49.2" lengthAdjust="spacingAndGlyphs">-1h,44m</text><text x="312.0" y="903.0" font-size="12.5" fill="#e0e0e0" text-anchor="middle" font-weight="normal" textLength="49.2" lengthAdjust="spacingAndGlyphs">-1h,42m</text><text x="535.5" y="903.0" font-size="12.5" fill="#e0e0e0" text-anchor="middle" font-weight="normal" textLength="49.2" lengthAdjust="spacingAndGlyphs">-1h,40m</text><text x="759.0" y="903.0" font-size="12.5" fill="#e0e0e0" text-anchor="middle" font-weight="normal" textLength="49.2" lengthAdjust="spacingAndGlyphs">-1h,38m</text><text x="982.5" y="903.0" font-size="12.5" fill="#e0e0e0" text-anchor="middle" font-weight="normal" textLength="49.2" lengthAdjust="spacingAndGlyphs">-1h,36m</text></g><text x="0" y="0" font-size="12.5" fill="#e0e0e0" text-anchor="middle" textLength="35" lengthAdjust="spacingAndGlyphs" transform="translate(35.0,683.0) rotate(-90)">undef</text><rect x="87.8" y="489.6" width="322.6" height="161.3" fill="rgba(255,255,255,0.065)" stroke="rgba(255,255,255,0.28)" stroke-width="1"/><clipPath id="cml"><rect x="78" y="479" width="1122" height="407"/></clipPath><g clip-path="url(#cml)"><path d="M77.0,635.0C80.3,633.3 83.7,630.0 87.0,630.0C92.0,630.0 97.0,634.5 102.0,636.2C109.5,638.9 117.0,643.0 124.5,643.0C132.8,643.0 141.2,635.0 149.5,635.0C160.3,635.0 171.2,643.8 182.0,643.8C186.2,643.8 190.3,640.3 194.5,635.0C197.0,631.8 199.5,616.4 202.0,602.5C205.3,584.0 208.7,522.5 212.0,522.5C214.5,522.5 217.0,547.4 219.5,577.5C221.2,597.6 222.8,688.2 224.5,715.0C227.4,761.8 230.3,808.8 233.2,808.8C236.2,808.8 239.1,756.4 242.0,715.0C244.1,685.4 246.2,615.1 248.2,590.0C250.2,566.9 252.1,540.0 254.0,540.0C256.7,540.0 259.3,572.1 262.0,590.0C266.2,617.9 270.3,681.2 274.5,681.2C278.7,681.2 282.8,633.7 287.0,620.0C288.2,615.9 289.5,610.0 290.8,610.0C293.8,610.0 296.9,617.3 300.0,623.3C303.9,630.9 307.8,660.0 311.7,660.0C317.8,660.0 323.9,630.8 330.0,630.8C335.3,630.8 340.6,665.0 345.8,665.0C348.9,665.0 351.9,648.2 355.0,640.0C360.0,626.6 365.0,600.8 370.0,600.8C373.3,600.8 376.7,615.4 380.0,623.3C383.3,631.2 386.7,648.3 390.0,648.3C392.2,648.3 394.4,648.3 396.7,648.3C401.1,648.3 405.6,640.0 410.0,640.0C415.6,640.0 421.1,649.2 426.7,649.2C433.3,649.2 440.0,640.0 446.7,640.0C452.2,640.0 457.8,645.0 463.3,645.0C468.9,645.0 474.4,639.7 480.0,639.7C486.2,639.7 492.5,643.1 498.8,643.1C505.0,643.1 511.2,639.2 517.5,639.2C523.2,639.2 529.0,643.1 534.7,643.1C544.6,643.1 554.5,642.8 564.4,642.3C570.6,642.0 576.9,638.4 583.1,638.4C588.3,638.4 593.5,638.8 598.8,638.8C601.9,638.8 605.0,638.1 608.1,638.1C613.3,638.1 618.5,641.2 623.8,641.2C630.5,641.2 637.3,635.3 644.1,635.3C649.3,635.3 654.5,637.2 659.7,637.2C665.9,637.2 672.2,637.2 678.4,637.2C683.1,637.2 687.8,640.0 692.5,640.0C698.8,640.0 705.0,635.3 711.2,635.3C717.5,635.3 723.8,637.2 730.0,637.2C736.2,637.2 742.5,634.1 748.8,634.1C754.0,634.1 759.2,637.2 764.4,637.2C771.7,637.2 779.0,632.2 786.2,632.2C793.5,632.2 800.8,635.3 808.1,635.3C814.4,635.3 820.6,630.3 826.9,630.3C833.6,630.3 840.4,636.1 847.2,636.1C854.0,636.1 860.7,630.9 867.5,630.9C868.3,630.9 869.2,631.1 870.0,631.2C874.3,631.7 878.6,632.9 882.9,633.1C890.2,633.5 897.5,633.8 904.8,633.8C910.4,633.8 916.0,623.5 921.5,623.5C927.6,623.5 933.6,632.1 939.6,632.5C946.5,632.9 953.3,632.7 960.2,633.1C965.4,633.5 970.5,638.9 975.7,638.9C981.7,638.9 987.7,631.9 993.7,631.9C997.6,631.9 1001.4,640.9 1005.3,640.9C1008.7,640.9 1012.2,628.2 1015.6,621.5C1019.1,614.9 1022.5,600.9 1025.9,600.9C1028.9,600.9 1031.9,608.8 1034.9,615.1C1037.1,619.6 1039.2,630.6 1041.4,634.4C1043.8,638.7 1046.1,643.5 1048.5,643.5C1054.3,643.5 1060.1,629.3 1065.9,629.3C1071.0,629.3 1076.2,638.3 1081.3,638.3C1087.4,638.3 1093.4,636.4 1099.4,636.4C1106.7,636.4 1114.0,637.0 1121.3,637.0C1129.9,637.0 1138.5,631.9 1147.1,631.9C1153.5,631.9 1159.9,632.5 1166.4,632.5C1171.5,632.5 1176.7,627.3 1181.9,627.3C1187.9,627.3 1193.9,627.8 1199.9,628.0" stroke="#ff7f0e" stroke-width="3.2" fill="none" stroke-linejoin="round"/><path d="M77.0,621.2C85.3,621.7 93.7,622.5 102.0,622.5C110.3,622.5 118.7,618.8 127.0,618.8C135.3,618.8 143.7,623.8 152.0,623.8C164.5,623.8 177.0,619.5 189.5,619.5C192.8,619.5 196.2,619.7 199.5,620.0C202.8,620.3 206.2,635.0 209.5,635.0C214.9,635.0 220.3,615.0 225.8,615.0C230.3,615.0 234.9,626.2 239.5,626.2C245.3,626.2 251.2,587.5 257.0,587.5C263.7,587.5 270.3,626.2 277.0,626.2C282.8,626.2 288.7,612.5 294.5,612.5C296.3,612.5 298.2,615.4 300.0,616.7C303.3,619.0 306.7,623.3 310.0,623.3C320.6,623.3 331.1,620.9 341.7,613.3C343.9,611.7 346.1,598.5 348.3,588.3C352.5,569.3 356.7,510.8 360.8,510.8C363.9,510.8 366.9,564.3 370.0,588.3C373.9,618.9 377.8,673.3 381.7,673.3C384.4,673.3 387.2,656.6 390.0,646.7C393.6,633.8 397.2,602.5 400.8,602.5C406.1,602.5 411.4,636.7 416.7,636.7C423.3,636.7 430.0,612.5 436.7,612.5C442.8,612.5 448.9,630.8 455.0,630.8C461.7,630.8 468.3,617.5 475.0,617.5C476.7,617.5 478.3,618.3 480.0,618.9C483.1,620.1 486.2,625.6 489.4,625.6C495.6,625.6 501.9,621.2 508.1,621.2C514.4,621.2 520.6,622.5 526.9,622.8C536.2,623.2 545.6,623.6 555.0,623.6C558.1,623.6 561.2,622.0 564.4,622.0C570.1,622.0 575.8,625.2 581.6,625.2C590.9,625.2 600.3,625.2 609.7,625.2C615.9,625.2 622.2,619.4 628.4,619.4C635.2,619.4 642.0,623.6 648.8,623.6C655.0,623.6 661.2,619.4 667.5,619.4C673.8,619.4 680.0,623.1 686.2,623.1C698.8,623.1 711.2,622.0 723.8,622.0C730.0,622.0 736.2,624.1 742.5,624.1C749.8,624.1 757.1,620.9 764.4,620.9C773.8,620.9 783.1,623.1 792.5,623.1C797.7,623.1 802.9,621.2 808.1,621.2C815.9,621.2 823.8,627.5 831.6,627.5C839.4,627.5 847.2,624.2 855.0,623.6C860.0,623.2 865.0,623.1 870.0,622.8C874.3,622.6 878.6,622.2 882.9,622.2C889.3,622.2 895.8,622.6 902.2,623.5C905.2,623.9 908.2,629.9 911.2,634.4C914.7,639.7 918.1,655.7 921.5,655.7C925.0,655.7 928.4,638.1 931.9,631.9C936.6,623.3 941.3,611.2 946.0,611.2C951.2,611.2 956.3,618.3 961.5,618.3C967.1,618.3 972.7,613.2 978.2,613.2C982.5,613.2 986.8,619.0 991.1,619.0C994.1,619.0 997.1,613.0 1000.2,608.7C1004.7,602.1 1009.2,580.3 1013.7,580.3C1017.3,580.3 1021.0,590.1 1024.6,598.4C1027.2,604.1 1029.8,618.2 1032.4,624.1C1034.5,629.1 1036.7,635.7 1038.8,635.7C1044.4,635.7 1050.0,620.9 1055.6,620.9C1062.0,620.9 1068.5,626.1 1074.9,626.1C1080.9,626.1 1086.9,618.3 1092.9,618.3C1100.2,618.3 1107.5,626.1 1114.8,626.1C1123.4,626.1 1132.0,621.5 1140.6,621.5C1149.2,621.5 1157.8,625.4 1166.4,625.4C1177.6,625.4 1188.7,625.4 1199.9,625.4" stroke="#2ca02c" stroke-width="3.2" fill="none" stroke-linejoin="round"/><path d="M77.0,620.0C82.0,620.8 87.0,622.5 92.0,622.5C102.8,622.5 113.7,616.2 124.5,616.2C133.7,616.2 142.8,626.2 152.0,626.2C165.3,626.2 178.7,625.0 192.0,625.0C195.3,625.0 198.7,636.2 202.0,647.5C205.3,658.8 208.7,689.5 212.0,715.0C216.3,748.1 220.7,831.2 225.0,831.2C229.0,831.2 233.0,782.8 237.0,740.0C239.1,717.7 241.2,660.2 243.2,640.0C245.8,615.8 248.2,588.8 250.8,588.8C256.2,588.8 261.6,630.0 267.0,630.0C272.8,630.0 278.7,600.0 284.5,600.0C289.5,600.0 294.5,602.4 299.5,617.5C299.7,618.0 299.8,626.3 300.0,626.7C302.2,631.0 304.4,631.7 306.7,631.7C311.7,631.7 316.7,615.8 321.7,615.8C325.6,615.8 329.4,618.3 333.3,618.3C336.1,618.3 338.9,614.5 341.7,610.0C346.4,602.4 351.1,524.2 355.8,524.2C359.4,524.2 363.1,564.4 366.7,588.3C370.0,610.4 373.3,663.3 376.7,663.3C380.0,663.3 383.3,640.1 386.7,630.0C389.4,621.6 392.2,606.7 395.0,606.7C401.1,606.7 407.2,643.3 413.3,643.3C420.0,643.3 426.7,613.3 433.3,613.3C438.9,613.3 444.4,630.0 450.0,630.0C456.1,630.0 462.2,620.0 468.3,620.0C472.2,620.0 476.1,623.7 480.0,625.2C483.1,626.3 486.2,628.3 489.4,628.3C494.6,628.3 499.8,622.0 505.0,622.0C511.8,622.0 518.5,626.2 525.3,626.2C532.1,626.2 538.9,623.6 545.6,623.6C550.8,623.6 556.0,627.2 561.2,627.2C570.6,627.2 580.0,622.5 589.4,622.5C597.2,622.5 605.0,624.1 612.8,624.1C620.6,624.1 628.4,622.0 636.2,622.0C640.4,622.0 644.6,623.1 648.8,623.1C655.0,623.1 661.2,622.0 667.5,622.0C675.3,622.0 683.1,624.4 690.9,624.4C698.8,624.4 706.6,623.6 714.4,623.6C722.7,623.6 731.0,625.2 739.4,625.2C746.7,625.2 754.0,622.5 761.2,622.5C771.7,622.5 782.1,623.3 792.5,623.6C805.5,624.0 818.5,624.7 831.6,624.7C839.4,624.7 847.2,622.4 855.0,622.0C860.0,621.8 865.0,621.5 870.0,621.5C875.2,621.5 880.3,623.5 885.5,623.5C892.3,623.5 899.2,620.9 906.1,620.9C914.7,620.9 923.3,623.5 931.9,623.5C944.7,623.5 957.6,622.2 970.5,622.2C976.5,622.2 982.5,622.6 988.6,623.5C992.0,624.0 995.4,634.7 998.9,642.2C1003.4,651.9 1007.9,679.5 1012.4,679.5C1016.5,679.5 1020.6,660.0 1024.6,647.3C1027.2,639.3 1029.8,624.5 1032.4,619.0C1034.9,613.5 1037.5,607.4 1040.1,607.4C1044.8,607.4 1049.6,618.3 1054.3,618.3C1060.3,618.3 1066.3,613.8 1072.3,613.8C1077.9,613.8 1083.5,619.6 1089.1,619.6C1095.1,619.6 1101.1,617.0 1107.1,617.0C1112.3,617.0 1117.4,621.5 1122.6,621.5C1136.8,621.5 1150.9,620.9 1165.1,620.9C1169.8,620.9 1174.6,627.3 1179.3,627.3C1186.2,627.3 1193.0,626.1 1199.9,625.4" stroke="#1f77b4" stroke-width="3.2" fill="none" stroke-linejoin="round"/></g><rect x="96.5" y="498.0" width="19.2" height="19.2" fill="#ff7f0e"/><text x="122.2" y="513.2" font-size="13" fill="#e6e6e6" text-anchor="start" font-weight="normal" textLength="278.9" lengthAdjust="spacingAndGlyphs">H1:ASC-ADS_YAW3_DEMOD_I_OUT16 [s-trend]</text><rect x="96.5" y="523.0" width="19.2" height="19.2" fill="#2ca02c"/><text x="122.2" y="538.2" font-size="13" fill="#e6e6e6" text-anchor="start" font-weight="normal" textLength="278.9" lengthAdjust="spacingAndGlyphs">H1:ASC-ADS_YAW4_DEMOD_I_OUT16 [s-trend]</text><rect x="96.5" y="548.0" width="19.2" height="19.2" fill="#1f77b4"/><text x="122.2" y="563.2" font-size="13" fill="#e6e6e6" text-anchor="start" font-weight="normal" textLength="278.9" lengthAdjust="spacingAndGlyphs">H1:ASC-ADS_YAW5_DEMOD_I_OUT16 [s-trend]</text><rect x="96.5" y="573.0" width="19.2" height="19.2" fill="#ff7f0e"/><text x="122.2" y="588.2" font-size="13" fill="#e6e6e6" text-anchor="start" font-weight="normal" textLength="250.8" lengthAdjust="spacingAndGlyphs">H1:ASC-ADS_YAW3_DOF_INMON [s-trend]</text><rect x="96.5" y="598.0" width="19.2" height="19.2" fill="#2ca02c"/><text x="122.2" y="613.2" font-size="13" fill="#e6e6e6" text-anchor="start" font-weight="normal" textLength="250.8" lengthAdjust="spacingAndGlyphs">H1:ASC-ADS_YAW4_DOF_INMON [s-trend]</text><rect x="96.5" y="623.0" width="19.2" height="19.2" fill="#1f77b4"/><text x="122.2" y="638.2" font-size="13" fill="#e6e6e6" text-anchor="start" font-weight="normal" textLength="250.8" lengthAdjust="spacingAndGlyphs">H1:ASC-ADS_YAW5_DOF_INMON [s-trend]</text><rect x="1288" y="479" width="1" height="407" fill="#1e1e1e"/><rect x="1351" y="479" width="1" height="407" fill="#0f0f0f"/><rect x="1414" y="479" width="1" height="407" fill="#0f0f0f"/><rect x="1477" y="479" width="1" height="407" fill="#0f0f0f"/><rect x="1540" y="479" width="1" height="407" fill="#1e1e1e"/><rect x="1602" y="479" width="1" height="407" fill="#0f0f0f"/><rect x="1665" y="479" width="1" height="407" fill="#0f0f0f"/><rect x="1728" y="479" width="1" height="407" fill="#0f0f0f"/><rect x="1791" y="479" width="1" height="407" fill="#1e1e1e"/><rect x="1854" y="479" width="1" height="407" fill="#0f0f0f"/><rect x="1917" y="479" width="1" height="407" fill="#0f0f0f"/><rect x="1980" y="479" width="1" height="407" fill="#0f0f0f"/><rect x="2042" y="479" width="1" height="407" fill="#1e1e1e"/><rect x="2105" y="479" width="1" height="407" fill="#0f0f0f"/><rect x="2168" y="479" width="1" height="407" fill="#0f0f0f"/><rect x="2231" y="479" width="1" height="407" fill="#0f0f0f"/><rect x="2294" y="479" width="1" height="407" fill="#1e1e1e"/><rect x="2357" y="479" width="1" height="407" fill="#0f0f0f"/><rect x="2420" y="479" width="1" height="407" fill="#0f0f0f"/><rect x="2483" y="479" width="1" height="407" fill="#0f0f0f"/><rect x="1269" y="501" width="1271" height="1" fill="#0e0e0e"/><rect x="1269" y="537" width="1271" height="1" fill="#0e0e0e"/><rect x="1269" y="574" width="1271" height="1" fill="#0e0e0e"/><rect x="1269" y="610" width="1271" height="1" fill="#0e0e0e"/><rect x="1269" y="647" width="1271" height="1" fill="#0e0e0e"/><rect x="1269" y="683" width="1271" height="1" fill="#0e0e0e"/><rect x="1269" y="719" width="1271" height="1" fill="#0e0e0e"/><rect x="1269" y="756" width="1271" height="1" fill="#0e0e0e"/><rect x="1269" y="792" width="1271" height="1" fill="#0e0e0e"/><rect x="1269" y="829" width="1271" height="1" fill="#0e0e0e"/><rect x="1269" y="865" width="1271" height="1" fill="#0e0e0e"/><rect x="1266.8" y="479" width="1.4" height="408" fill="#a0a0a0"/><rect x="1267" y="885.8" width="1273" height="1.4" fill="#a0a0a0"/><text x="1261.0" y="506.1" font-size="12.5" fill="#e0e0e0" text-anchor="end" font-weight="normal">100</text><text x="1261.0" y="542.5" font-size="12.5" fill="#e0e0e0" text-anchor="end" font-weight="normal">80</text><text x="1261.0" y="578.9" font-size="12.5" fill="#e0e0e0" text-anchor="end" font-weight="normal">60</text><text x="1261.0" y="615.3" font-size="12.5" fill="#e0e0e0" text-anchor="end" font-weight="normal">40</text><text x="1261.0" y="651.7" font-size="12.5" fill="#e0e0e0" text-anchor="end" font-weight="normal">20</text><text x="1261.0" y="688.1" font-size="12.5" fill="#e0e0e0" text-anchor="end" font-weight="normal">0</text><text x="1261.0" y="724.5" font-size="12.5" fill="#e0e0e0" text-anchor="end" font-weight="normal">-20</text><text x="1261.0" y="760.9" font-size="12.5" fill="#e0e0e0" text-anchor="end" font-weight="normal">-40</text><text x="1261.0" y="797.3" font-size="12.5" fill="#e0e0e0" text-anchor="end" font-weight="normal">-60</text><text x="1261.0" y="833.7" font-size="12.5" fill="#e0e0e0" text-anchor="end" font-weight="normal">-80</text><text x="1261.0" y="870.1" font-size="12.5" fill="#e0e0e0" text-anchor="end" font-weight="normal">-100</text><clipPath id="cmrx"><rect x="1268" y="886" width="1313" height="30"/></clipPath><g clip-path="url(#cmrx)"><text x="1288.5" y="903.0" font-size="12.5" fill="#e0e0e0" text-anchor="middle" font-weight="normal" textLength="49.2" lengthAdjust="spacingAndGlyphs">-1h,44m</text><text x="1540.0" y="903.0" font-size="12.5" fill="#e0e0e0" text-anchor="middle" font-weight="normal" textLength="49.2" lengthAdjust="spacingAndGlyphs">-1h,42m</text><text x="1791.5" y="903.0" font-size="12.5" fill="#e0e0e0" text-anchor="middle" font-weight="normal" textLength="49.2" lengthAdjust="spacingAndGlyphs">-1h,40m</text><text x="2043.0" y="903.0" font-size="12.5" fill="#e0e0e0" text-anchor="middle" font-weight="normal" textLength="49.2" lengthAdjust="spacingAndGlyphs">-1h,38m</text><text x="2294.5" y="903.0" font-size="12.5" fill="#e0e0e0" text-anchor="middle" font-weight="normal" textLength="49.2" lengthAdjust="spacingAndGlyphs">-1h,36m</text></g><text x="0" y="0" font-size="12.5" fill="#e0e0e0" text-anchor="middle" textLength="35" lengthAdjust="spacingAndGlyphs" transform="translate(1221.0,683.0) rotate(-90)">undef</text><rect x="1277.5" y="489.5" width="291.4" height="87.0" fill="rgba(255,255,255,0.065)" stroke="rgba(255,255,255,0.28)" stroke-width="1"/><clipPath id="cmr"><rect x="1268" y="479" width="1272" height="407"/></clipPath><g clip-path="url(#cmr)"><path d="M1267.8,785.6C1270.6,778.1 1273.3,769.8 1276.1,763.3C1281.7,750.4 1287.2,730.0 1292.8,730.0C1299.3,730.0 1305.7,749.0 1312.2,760.6C1319.6,773.7 1327.0,806.4 1334.4,806.4C1343.2,806.4 1352.0,742.5 1360.8,742.5C1367.8,742.5 1374.7,769.7 1381.7,782.8C1387.2,793.2 1392.8,813.3 1398.3,813.3C1402.0,813.3 1405.7,800.9 1409.4,780.0C1411.3,769.6 1413.1,715.9 1415.0,674.4C1416.4,643.4 1417.8,589.8 1419.2,563.3C1420.6,536.8 1421.9,501.4 1423.3,501.4C1428.4,501.4 1433.5,501.4 1438.6,501.4C1439.5,501.4 1440.5,530.2 1441.4,563.3C1442.3,596.4 1443.2,766.9 1444.2,813.3C1444.6,836.5 1445.1,864.7 1445.6,864.7C1453.4,864.7 1461.3,864.7 1469.2,864.7C1471.0,864.7 1472.9,501.4 1474.7,501.4C1478.9,501.4 1483.1,501.4 1487.2,501.4C1490.0,501.4 1492.8,864.7 1495.6,864.7C1500.2,864.7 1504.8,864.7 1509.4,864.7C1514.1,864.7 1518.7,634.2 1523.3,634.2C1528.9,634.2 1534.4,864.7 1540.0,864.7C1543.7,864.7 1547.4,864.7 1551.1,864.7C1555.3,864.7 1559.4,743.9 1563.6,743.9C1567.8,743.9 1571.9,864.7 1576.1,864.7C1580.7,864.7 1585.4,864.7 1590.0,864.7C1596.3,864.7 1602.6,567.5 1608.9,567.5C1614.4,567.5 1620.0,708.2 1625.6,757.8C1629.3,790.9 1633.0,841.1 1636.7,841.1C1642.2,841.1 1647.8,798.1 1653.3,798.1C1659.8,798.1 1666.3,843.9 1672.8,843.9C1680.6,843.9 1688.5,791.1 1696.4,791.1C1702.9,791.1 1709.4,817.5 1715.8,817.5C1722.8,817.5 1729.7,786.9 1736.7,786.9C1743.1,786.9 1749.6,809.2 1756.1,809.2C1762.6,809.2 1769.1,788.3 1775.6,788.3C1783.0,788.3 1790.4,810.6 1797.8,810.6C1798.5,810.6 1799.3,810.2 1800.0,810.0C1805.6,808.5 1811.1,806.2 1816.7,805.0C1820.0,804.3 1823.3,804.2 1826.7,803.3C1836.1,800.9 1845.6,778.3 1855.0,778.3C1860.0,778.3 1865.0,783.3 1870.0,783.3C1873.3,783.3 1876.7,783.3 1880.0,783.3C1885.0,783.3 1890.0,796.7 1895.0,796.7C1902.8,796.7 1910.6,764.2 1918.3,764.2C1924.4,764.2 1930.6,773.3 1936.7,773.3C1942.2,773.3 1947.8,772.5 1953.3,772.5C1960.0,772.5 1966.7,790.0 1973.3,790.0C1981.7,790.0 1990.0,760.8 1998.3,760.8C2004.2,760.8 2010.0,770.8 2015.8,770.8C2022.2,770.8 2028.6,758.3 2035.0,758.3C2041.4,758.3 2047.8,771.7 2054.2,771.7C2063.6,771.7 2073.1,744.2 2082.5,744.2C2085.0,744.2 2087.5,745.5 2090.0,746.7C2094.2,748.6 2098.3,757.8 2102.5,757.8C2109.9,757.8 2117.3,734.2 2124.7,734.2C2132.6,734.2 2140.5,764.7 2148.3,764.7C2155.7,764.7 2163.1,738.3 2170.6,738.3C2176.1,738.3 2181.7,748.1 2187.2,748.1C2190.9,748.1 2194.6,746.7 2198.3,746.7C2203.0,746.7 2207.6,753.6 2212.2,753.6C2215.9,753.6 2219.6,735.3 2223.3,724.4C2226.6,715.0 2229.8,692.5 2233.1,692.5C2236.3,692.5 2239.5,700.2 2242.8,707.8C2245.6,714.3 2248.3,741.2 2251.1,743.9C2255.7,748.3 2260.4,747.7 2265.0,750.8C2273.3,756.5 2281.7,781.4 2290.0,781.4C2296.5,781.4 2303.0,742.5 2309.4,742.5C2314.5,742.5 2319.6,792.5 2324.7,792.5C2327.8,792.5 2330.8,733.3 2333.9,702.2C2338.1,659.8 2342.2,570.3 2346.4,570.3C2350.6,570.3 2354.7,636.0 2358.9,674.4C2363.1,712.9 2367.2,803.6 2371.4,803.6C2378.3,803.6 2385.3,734.2 2392.2,734.2C2399.6,734.2 2407.0,778.6 2414.4,778.6C2419.1,778.6 2423.7,771.7 2428.3,771.7C2433.9,771.7 2439.4,775.8 2445.0,775.8C2451.5,775.8 2458.0,770.3 2464.4,766.1C2471.9,761.3 2479.3,745.3 2486.7,745.3C2491.3,745.3 2495.9,752.2 2500.6,752.2C2509.8,752.2 2519.1,709.2 2528.3,709.2C2533.0,709.2 2537.6,712.9 2542.2,714.7" stroke="#ff7f0e" stroke-width="3.2" fill="none" stroke-linejoin="round"/><path d="M1267.8,668.9C1270.6,672.6 1273.3,676.6 1276.1,680.0C1280.3,685.1 1284.4,693.9 1288.6,693.9C1293.7,693.9 1298.8,686.9 1303.9,686.9C1307.1,686.9 1310.4,689.7 1313.6,689.7C1320.1,689.7 1326.6,649.4 1333.1,649.4C1338.1,649.4 1343.2,669.7 1348.3,680.0C1355.3,694.1 1362.2,723.1 1369.2,723.1C1375.2,723.1 1381.2,700.6 1387.2,688.3C1393.2,676.1 1399.3,649.4 1405.3,649.4C1409.0,649.4 1412.7,661.8 1416.4,680.0C1418.7,691.4 1421.0,762.0 1423.3,785.6C1425.4,806.3 1427.4,832.8 1429.4,832.8C1432.0,832.8 1434.6,765.8 1437.2,730.0C1440.0,691.6 1442.8,609.2 1445.6,609.2C1445.7,609.2 1445.9,609.2 1446.1,609.2C1451.0,609.2 1455.9,731.4 1460.8,731.4C1464.1,731.4 1467.3,501.4 1470.6,501.4C1477.5,501.4 1484.4,501.4 1491.4,501.4C1496.5,501.4 1501.6,739.7 1506.7,739.7C1513.1,739.7 1519.6,611.9 1526.1,611.9C1532.6,611.9 1539.1,700.8 1545.6,700.8C1553.9,700.8 1562.2,655.1 1570.6,607.8C1574.3,586.7 1578.0,501.4 1581.7,501.4C1590.9,501.4 1600.2,501.4 1609.4,501.4C1610.8,501.4 1612.2,864.7 1613.6,864.7C1616.9,864.7 1620.1,864.7 1623.3,864.7C1625.9,864.7 1628.5,864.7 1631.1,864.7C1635.3,864.7 1639.4,501.4 1643.6,501.4C1650.1,501.4 1656.6,827.2 1663.1,827.2C1670.2,827.2 1677.3,585.6 1684.4,585.6C1690.7,585.6 1697.0,771.7 1703.3,771.7C1711.2,771.7 1719.1,638.3 1726.9,638.3C1733.9,638.3 1740.8,724.4 1747.8,724.4C1754.7,724.4 1761.7,682.8 1768.6,682.8C1774.2,682.8 1779.7,692.5 1785.3,692.5C1789.9,692.5 1794.5,685.6 1799.2,685.6C1799.4,685.6 1799.7,685.7 1800.0,685.8C1805.6,687.9 1811.1,694.2 1816.7,694.2C1820.6,694.2 1824.4,691.7 1828.3,691.7C1831.7,691.7 1835.0,699.1 1838.3,703.3C1843.3,709.6 1848.3,724.2 1853.3,724.2C1857.8,724.2 1862.2,720.8 1866.7,720.8C1870.0,720.8 1873.3,720.8 1876.7,720.8C1878.9,720.8 1881.1,714.4 1883.3,710.0C1889.2,698.3 1895.0,659.2 1900.8,659.2C1908.1,659.2 1915.3,701.7 1922.5,701.7C1930.0,701.7 1937.5,654.2 1945.0,654.2C1951.7,654.2 1958.3,692.7 1965.0,695.8C1968.9,697.7 1972.8,697.7 1976.7,699.2C1981.1,700.8 1985.6,706.7 1990.0,706.7C1996.9,706.7 2003.9,692.5 2010.8,692.5C2016.9,692.5 2023.1,710.0 2029.2,710.0C2036.7,710.0 2044.2,676.7 2051.7,676.7C2061.1,676.7 2070.6,695.0 2080.0,695.0C2083.3,695.0 2086.7,691.8 2090.0,689.7C2093.7,687.4 2097.4,681.4 2101.1,681.4C2104.8,681.4 2108.5,694.1 2112.2,702.2C2118.7,716.4 2125.2,755.0 2131.7,755.0C2140.9,755.0 2150.2,693.9 2159.4,693.9C2163.1,693.9 2166.9,693.9 2170.6,693.9C2175.2,693.9 2179.8,689.7 2184.4,689.7C2191.9,689.7 2199.3,692.9 2206.7,702.2C2208.5,704.6 2210.4,724.8 2212.2,743.9C2214.5,767.8 2216.9,864.7 2219.2,864.7C2226.1,864.7 2233.1,864.7 2240.0,864.7C2242.8,864.7 2245.6,680.7 2248.3,646.7C2251.6,607.0 2254.8,570.3 2258.1,570.3C2263.6,570.3 2269.2,634.2 2274.7,634.2C2280.0,634.2 2285.3,584.2 2290.6,584.2C2295.9,584.2 2301.3,648.1 2306.7,648.1C2310.4,648.1 2314.1,501.4 2317.8,501.4C2327.0,501.4 2336.3,501.4 2345.6,501.4C2347.2,501.4 2348.9,556.4 2350.6,591.1C2352.4,629.7 2354.3,695.0 2356.1,730.0C2358.4,773.8 2360.7,834.2 2363.1,834.2C2366.3,834.2 2369.5,780.9 2372.8,757.8C2376.5,731.4 2380.2,685.6 2383.9,685.6C2389.4,685.6 2395.0,734.2 2400.6,734.2C2408.1,734.2 2415.7,646.7 2423.3,646.7C2431.5,646.7 2439.6,730.0 2447.8,730.0C2455.6,730.0 2463.5,675.8 2471.4,675.8C2478.3,675.8 2485.3,712.3 2492.2,716.1C2497.8,719.2 2503.3,719.1 2508.9,721.7C2515.8,724.9 2522.8,738.3 2529.7,738.3C2533.9,738.3 2538.1,732.8 2542.2,730.0" stroke="#2ca02c" stroke-width="3.2" fill="none" stroke-linejoin="round"/><path d="M1267.8,660.6C1270.1,655.9 1272.4,646.7 1274.7,646.7C1280.7,646.7 1286.8,692.5 1292.8,692.5C1298.3,692.5 1303.9,661.2 1309.4,652.2C1313.1,646.2 1316.9,643.8 1320.6,638.3C1324.7,632.2 1328.9,616.1 1333.1,616.1C1337.2,616.1 1341.4,635.4 1345.6,652.2C1349.3,667.1 1353.0,717.2 1356.7,724.4C1358.5,728.1 1360.4,731.4 1362.2,731.4C1365.9,731.4 1369.6,730.0 1373.3,730.0C1378.0,730.0 1382.6,741.1 1387.2,741.1C1392.8,741.1 1398.3,724.4 1403.9,724.4C1406.7,724.4 1409.4,738.5 1412.2,757.8C1414.1,770.6 1415.9,864.7 1417.8,864.7C1434.0,864.7 1450.2,864.7 1466.4,864.7C1467.8,864.7 1469.2,501.4 1470.6,501.4C1472.9,501.4 1475.2,501.4 1477.5,501.4C1483.1,501.4 1488.6,832.8 1494.2,832.8C1498.8,832.8 1503.4,501.4 1508.1,501.4C1511.8,501.4 1515.5,501.4 1519.2,501.4C1524.7,501.4 1530.3,799.4 1535.8,799.4C1542.8,799.4 1549.7,609.2 1556.7,609.2C1559.4,609.2 1562.2,643.9 1565.0,643.9C1568.7,643.9 1572.4,501.4 1576.1,501.4C1586.3,501.4 1596.5,501.4 1606.7,501.4C1608.1,501.4 1609.4,864.7 1610.8,864.7C1614.1,864.7 1617.3,864.7 1620.6,864.7C1626.4,864.7 1632.2,530.0 1638.1,530.0C1644.1,530.0 1650.1,864.7 1656.1,864.7C1658.0,864.7 1659.8,864.7 1661.7,864.7C1667.7,864.7 1673.7,593.9 1679.7,593.9C1686.7,593.9 1693.6,774.4 1700.6,774.4C1707.5,774.4 1714.4,671.7 1721.4,671.7C1728.3,671.7 1735.3,756.4 1742.2,756.4C1749.2,756.4 1756.1,691.1 1763.1,691.1C1770.0,691.1 1776.9,731.4 1783.9,731.4C1789.3,731.4 1794.6,706.7 1800.0,706.7C1802.2,706.7 1804.4,707.9 1806.7,709.2C1812.8,712.6 1818.9,740.0 1825.0,740.0C1831.1,740.0 1837.2,713.4 1843.3,706.7C1849.7,699.7 1856.1,691.7 1862.5,691.7C1869.2,691.7 1875.8,710.0 1882.5,710.0C1890.6,710.0 1898.6,689.2 1906.7,689.2C1913.9,689.2 1921.1,697.5 1928.3,697.5C1933.9,697.5 1939.4,691.7 1945.0,691.7C1951.7,691.7 1958.3,705.9 1965.0,706.7C1969.4,707.2 1973.9,707.0 1978.3,707.5C1982.8,708.0 1987.2,711.7 1991.7,711.7C1995.6,711.7 1999.4,710.8 2003.3,710.8C2010.6,710.8 2017.8,725.0 2025.0,725.0C2035.0,725.0 2045.0,687.5 2055.0,687.5C2058.9,687.5 2062.8,687.9 2066.7,688.3C2074.4,689.2 2082.2,702.2 2090.0,702.2C2094.6,702.2 2099.3,695.3 2103.9,695.3C2112.7,695.3 2121.5,716.1 2130.3,716.1C2138.1,716.1 2146.0,689.2 2153.9,684.2C2160.4,680.0 2166.9,675.8 2173.3,675.8C2180.7,675.8 2188.1,700.8 2195.6,700.8C2202.5,700.8 2209.4,677.2 2216.4,677.2C2224.3,677.2 2232.1,703.6 2240.0,703.6C2246.5,703.6 2253.0,695.3 2259.4,695.3C2264.1,695.3 2268.7,696.7 2273.3,696.7C2278.0,696.7 2282.6,692.5 2287.2,692.5C2292.3,692.5 2297.4,693.2 2302.5,695.3C2304.8,696.2 2307.1,729.0 2309.4,757.8C2311.3,780.8 2313.1,864.7 2315.0,864.7C2325.9,864.7 2336.9,864.7 2347.8,864.7C2349.6,864.7 2351.5,683.1 2353.3,646.7C2356.6,583.0 2359.8,527.2 2363.1,527.2C2369.5,527.2 2376.0,638.3 2382.5,638.3C2388.5,638.3 2394.5,589.7 2400.6,589.7C2408.0,589.7 2415.4,656.4 2422.8,656.4C2427.9,656.4 2433.0,632.8 2438.1,632.8C2445.9,632.8 2453.8,677.2 2461.7,677.2C2468.1,677.2 2474.6,676.6 2481.1,675.8C2486.7,675.2 2492.2,671.7 2497.8,671.7C2503.3,671.7 2508.9,690.4 2514.4,702.2C2519.5,713.1 2524.6,741.1 2529.7,741.1C2533.9,741.1 2538.1,733.7 2542.2,730.0" stroke="#1f77b4" stroke-width="3.2" fill="none" stroke-linejoin="round"/></g><rect x="1286.2" y="497.9" width="19.2" height="19.2" fill="#ff7f0e"/><text x="1311.9" y="513.1" font-size="13" fill="#e6e6e6" text-anchor="start" font-weight="normal" textLength="246.6" lengthAdjust="spacingAndGlyphs">H1:ASC-ADS_YAW3_DOF_OUT16 [s-trend]</text><rect x="1286.2" y="522.9" width="19.2" height="19.2" fill="#2ca02c"/><text x="1311.9" y="538.1" font-size="13" fill="#e6e6e6" text-anchor="start" font-weight="normal" textLength="246.6" lengthAdjust="spacingAndGlyphs">H1:ASC-ADS_YAW4_DOF_OUT16 [s-trend]</text><rect x="1286.2" y="547.9" width="19.2" height="19.2" fill="#1f77b4"/><text x="1311.9" y="563.1" font-size="13" fill="#e6e6e6" text-anchor="start" font-weight="normal" textLength="246.6" lengthAdjust="spacingAndGlyphs">H1:ASC-ADS_YAW5_DOF_OUT16 [s-trend]</text><rect x="88" y="944" width="1" height="361" fill="#1e1e1e"/><rect x="144" y="944" width="1" height="361" fill="#0f0f0f"/><rect x="200" y="944" width="1" height="361" fill="#0f0f0f"/><rect x="256" y="944" width="1" height="361" fill="#0f0f0f"/><rect x="312" y="944" width="1" height="361" fill="#1e1e1e"/><rect x="367" y="944" width="1" height="361" fill="#0f0f0f"/><rect x="423" y="944" width="1" height="361" fill="#0f0f0f"/><rect x="479" y="944" width="1" height="361" fill="#0f0f0f"/><rect x="535" y="944" width="1" height="361" fill="#1e1e1e"/><rect x="591" y="944" width="1" height="361" fill="#0f0f0f"/><rect x="647" y="944" width="1" height="361" fill="#0f0f0f"/><rect x="703" y="944" width="1" height="361" fill="#0f0f0f"/><rect x="758" y="944" width="1" height="361" fill="#1e1e1e"/><rect x="814" y="944" width="1" height="361" fill="#0f0f0f"/><rect x="870" y="944" width="1" height="361" fill="#0f0f0f"/><rect x="926" y="944" width="1" height="361" fill="#0f0f0f"/><rect x="982" y="944" width="1" height="361" fill="#1e1e1e"/><rect x="1038" y="944" width="1" height="361" fill="#0f0f0f"/><rect x="1094" y="944" width="1" height="361" fill="#0f0f0f"/><rect x="1150" y="944" width="1" height="361" fill="#0f0f0f"/><rect x="82" y="964" width="1118" height="1" fill="#0e0e0e"/><rect x="82" y="994" width="1118" height="1" fill="#0e0e0e"/><rect x="82" y="1024" width="1118" height="1" fill="#0e0e0e"/><rect x="82" y="1054" width="1118" height="1" fill="#0e0e0e"/><rect x="82" y="1085" width="1118" height="1" fill="#0e0e0e"/><rect x="82" y="1115" width="1118" height="1" fill="#0e0e0e"/><rect x="82" y="1145" width="1118" height="1" fill="#0e0e0e"/><rect x="82" y="1175" width="1118" height="1" fill="#0e0e0e"/><rect x="82" y="1205" width="1118" height="1" fill="#0e0e0e"/><rect x="82" y="1235" width="1118" height="1" fill="#0e0e0e"/><rect x="82" y="1266" width="1118" height="1" fill="#0e0e0e"/><rect x="82" y="1296" width="1118" height="1" fill="#0e0e0e"/><rect x="79.8" y="944" width="1.4" height="362" fill="#a0a0a0"/><rect x="80" y="1304.8" width="1120" height="1.4" fill="#a0a0a0"/><text x="74.0" y="969.0" font-size="12.5" fill="#e0e0e0" text-anchor="end" font-weight="normal">600.4</text><text x="74.0" y="999.2" font-size="12.5" fill="#e0e0e0" text-anchor="end" font-weight="normal">600.2</text><text x="74.0" y="1029.3" font-size="12.5" fill="#e0e0e0" text-anchor="end" font-weight="normal">600</text><text x="74.0" y="1059.5" font-size="12.5" fill="#e0e0e0" text-anchor="end" font-weight="normal">599.8</text><text x="74.0" y="1089.7" font-size="12.5" fill="#e0e0e0" text-anchor="end" font-weight="normal">599.6</text><text x="74.0" y="1119.8" font-size="12.5" fill="#e0e0e0" text-anchor="end" font-weight="normal">599.4</text><text x="74.0" y="1150.0" font-size="12.5" fill="#e0e0e0" text-anchor="end" font-weight="normal">599.2</text><text x="74.0" y="1180.2" font-size="12.5" fill="#e0e0e0" text-anchor="end" font-weight="normal">599</text><text x="74.0" y="1210.4" font-size="12.5" fill="#e0e0e0" text-anchor="end" font-weight="normal">598.8</text><text x="74.0" y="1240.5" font-size="12.5" fill="#e0e0e0" text-anchor="end" font-weight="normal">598.6</text><text x="74.0" y="1270.7" font-size="12.5" fill="#e0e0e0" text-anchor="end" font-weight="normal">598.4</text><text x="74.0" y="1300.9" font-size="12.5" fill="#e0e0e0" text-anchor="end" font-weight="normal">598.2</text><clipPath id="cbx"><rect x="81" y="1305" width="1160" height="30"/></clipPath><g clip-path="url(#cbx)"><text x="88.5" y="1322.0" font-size="12.5" fill="#e0e0e0" text-anchor="middle" font-weight="normal" textLength="49.2" lengthAdjust="spacingAndGlyphs">-1h,44m</text><text x="312.0" y="1322.0" font-size="12.5" fill="#e0e0e0" text-anchor="middle" font-weight="normal" textLength="49.2" lengthAdjust="spacingAndGlyphs">-1h,42m</text><text x="535.5" y="1322.0" font-size="12.5" fill="#e0e0e0" text-anchor="middle" font-weight="normal" textLength="49.2" lengthAdjust="spacingAndGlyphs">-1h,40m</text><text x="759.0" y="1322.0" font-size="12.5" fill="#e0e0e0" text-anchor="middle" font-weight="normal" textLength="49.2" lengthAdjust="spacingAndGlyphs">-1h,38m</text><text x="982.5" y="1322.0" font-size="12.5" fill="#e0e0e0" text-anchor="middle" font-weight="normal" textLength="49.2" lengthAdjust="spacingAndGlyphs">-1h,36m</text></g><text x="0" y="0" font-size="12.5" fill="#e0e0e0" text-anchor="middle" transform="translate(34.0,1125.0) rotate(-90)">V</text><text x="640.0" y="933.7" font-size="13" fill="#e6e6e6" text-anchor="middle" font-weight="normal" textLength="220.0" lengthAdjust="spacingAndGlyphs">H1:GRD-ISC_LOCK_STATE_N [s-trend]</text><path d="M191.3,1305 L191.3,1024.35 L1200,1024.35" stroke="#b57fd4" stroke-width="1.4" fill="none"/><path d="M189.6,1305 L189.6,1024.5" stroke="#b57fd4" stroke-width="1" stroke-dasharray="4,3" fill="none" opacity="0.8"/><rect x="189.8" y="1095" width="2.5" height="210" fill="#b57fd4"/><text x="1279.8" y="1362.9" font-size="16.5" fill="#e8e8e8" text-anchor="middle" font-weight="normal" textLength="408.0" lengthAdjust="spacingAndGlyphs">t0 = Thu May 04 2023 21:55:34 UTC [1367272552.8750]</text><rect x="0" y="1381" width="2560" height="29" fill="#efefef"/><rect x="2.5" y="1383.5" width="99.0" height="24" rx="3" fill="url(#btng)" stroke="#a3a3a3" stroke-width="1"/><text x="27.3" y="1400.0" font-size="13" fill="#1e1e1e" text-anchor="start" font-weight="normal" textLength="63.3" lengthAdjust="spacingAndGlyphs">start online</text><path d="M12.2,1389.8 L20.8,1395 L12.2,1400.2 Z" stroke="#8a8a8a" stroke-width="1" fill="#f4f4f4"/><rect x="104.5" y="1383.5" width="99.0" height="24" rx="3" fill="url(#btng)" stroke="#a3a3a3" stroke-width="1"/><text x="130.5" y="1400.0" font-size="13" fill="#b5b5b5" text-anchor="start" font-weight="normal" textLength="61.7" lengthAdjust="spacingAndGlyphs">stop online</text><rect x="115.5" y="1390.5" width="8" height="8" fill="#f2f2f2" stroke="#c0c0c0" stroke-width="1"/><rect x="206.5" y="1383.5" width="99.0" height="24" rx="3" fill="url(#btng)" stroke="#a3a3a3" stroke-width="1"/><text x="242.2" y="1400.0" font-size="13" fill="#1e1e1e" text-anchor="start" font-weight="normal" textLength="27.8" lengthAdjust="spacingAndGlyphs">reset</text><rect x="2448.5" y="1383.5" width="79.0" height="24" rx="3" fill="url(#btng)" stroke="#a3a3a3" stroke-width="1"/><text x="2462.3" y="1400.0" font-size="13" fill="#1e1e1e" text-anchor="start" font-weight="normal" textLength="51.6" lengthAdjust="spacingAndGlyphs">snapshot</text><path d="M2537.8,1400.2 L2543.9,1392.3 L2550.1,1400.2 Z" fill="#333"/><rect x="0" y="1410" width="2560" height="30" fill="#8fb88f"/><text x="6.2" y="1430.2" font-size="13" fill="#1b1b1b" text-anchor="start" font-weight="normal" textLength="171.0" lengthAdjust="spacingAndGlyphs">Retrieving second trend data...</text></svg></body></html>
